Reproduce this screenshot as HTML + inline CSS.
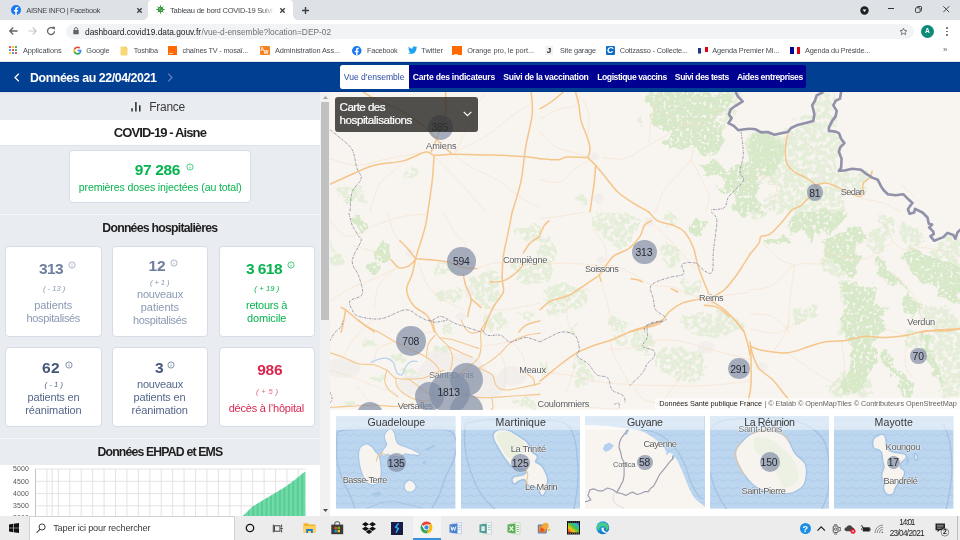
<!DOCTYPE html>
<html><head><meta charset="utf-8"><title>Tableau de bord COVID-19</title>
<style>
*{box-sizing:border-box;margin:0;padding:0}
html,body{width:960px;height:540px;overflow:hidden;background:#fff;font-family:"Liberation Sans",sans-serif}
#root{position:relative;width:960px;height:540px;overflow:hidden;will-change:transform}
.a{position:absolute}
.t{white-space:nowrap}
svg{overflow:visible}
</style></head><body><div id="root">
<div class="a" style="left:0.00px;top:0.00px;width:960.00px;height:20.00px;background:#dee1e6;"></div>
<svg class="a" style="left:142px;top:0" width="158" height="20" viewBox="0 0 158 20"><path d="M0 20 C4 20 6 18 6 14 V4 C6 1.500 7.500 0 10 0 H147 C149.500 0 151 1.500 151 4 V14 C151 18 153 20 157 20 Z" fill="#fff"/></svg>
<div class="a" style="left:0.00px;top:20.00px;width:960.00px;height:21.00px;background:#fff;"></div>
<div class="a" style="left:66.00px;top:23.50px;width:848.00px;height:15.50px;background:#f1f3f4;border-radius:8px;"></div>
<div class="a" style="left:0.00px;top:41.00px;width:960.00px;height:20.00px;background:#fff;"></div>
<div class="a" style="left:0.00px;top:60.50px;width:960.00px;height:1.00px;background:#e4e6ea;"></div>
<svg class="a" style="left:11px;top:5px" width="10" height="10" viewBox="0 0 20 20"><circle cx="10" cy="10" r="10" fill="#1877f2"/><path d="M13.9 12.9l.45-2.9h-2.8V8.1c0-.8.4-1.57 1.64-1.57h1.27V4.07S13.32 3.87 12.2 3.87c-2.28 0-3.77 1.38-3.77 3.88V10H5.9v2.9h2.53V20h3.12v-7.1z" fill="#fff"/></svg>
<div class="a t" style="left:26.30px;top:6.84px;font-size:7.6px;line-height:7.6px;color:#45494d;letter-spacing:-0.426px;">AISNE INFO | Facebook</div>
<svg class="a" style="left:136.5px;top:7.5px" width="5" height="5" viewBox="0 0 5 5"><path d="M0.3 0.3L4.7 4.7M4.7 0.3L0.3 4.7" stroke="#3c4043" stroke-width="1.300"/></svg>
<svg class="a" style="left:155.6px;top:5.4px" width="9" height="9" viewBox="0 0 18 18"><circle cx="9" cy="9" r="5.6" fill="#3f9a45"/><g stroke="#3f9a45" stroke-width="2" stroke-linecap="round"><path d="M9 1.500v3M9 13.500v3M1.500 9h3M13.500 9h3M3.700 3.700l2 2M12.300 12.300l2 2M14.300 3.700l-2 2M5.700 12.300l-2 2"/></g><circle cx="7.300" cy="7.600" r="1.200" fill="#bfe3c2"/><circle cx="10.800" cy="10.500" r="1.100" fill="#bfe3c2"/></svg>
<div class="a t" style="left:170.00px;top:6.84px;font-size:7.6px;line-height:7.6px;color:#45494d;letter-spacing:-0.259px;">Tableau de bord COVID-19 Suivi</div>
<div class="a" style="left:262.00px;top:3.00px;width:13.00px;height:14.00px;background:linear-gradient(90deg,rgba(255,255,255,0),#fff);"></div>
<svg class="a" style="left:280.3px;top:7.5px" width="5" height="5" viewBox="0 0 5 5"><path d="M0.3 0.3L4.7 4.7M4.7 0.3L0.3 4.7" stroke="#3c4043" stroke-width="1.300"/></svg>
<svg class="a" style="left:301.5px;top:6.5px" width="7" height="7" viewBox="0 0 7 7"><path d="M3.5 0V7M0 3.5H7" stroke="#3c4043" stroke-width="1.400"/></svg>
<svg class="a" style="left:860px;top:6px" width="9" height="9" viewBox="0 0 9 9"><circle cx="4.5" cy="4.5" r="4.2" fill="#202124"/><path d="M2.6 3.6H6.4L4.5 6z" fill="#fff"/></svg>
<div class="a" style="left:887.50px;top:8.30px;width:6.50px;height:0.80px;background:#333;"></div>
<svg class="a" style="left:914.5px;top:5.5px" width="7" height="7" viewBox="0 0 7 7"><rect x="0.5" y="1.8" width="4.6" height="4.6" fill="none" stroke="#333" stroke-width="0.9" rx="0.8"/><path d="M1.9 1.8V1.2c0-.4.3-.7.7-.7H5.8c.4 0 .7.3.7.7V4.4c0 .4-.3.7-.7.7H5.2" fill="none" stroke="#333" stroke-width="0.9"/></svg>
<svg class="a" style="left:943px;top:6px" width="6.5" height="6.5" viewBox="0 0 6.5 6.5"><path d="M0.3 0.3L6.2 6.2M6.2 0.3L0.3 6.2" stroke="#333" stroke-width="0.9"/></svg>
<svg class="a" style="left:9px;top:27px" width="9" height="8" viewBox="0 0 9 8"><path d="M4.2 0.5L0.8 4L4.2 7.5M0.8 4H8.6" fill="none" stroke="#5f6368" stroke-width="1.300"/></svg>
<svg class="a" style="left:28px;top:27px" width="9" height="8" viewBox="0 0 9 8"><path d="M4.8 0.5L8.2 4L4.8 7.5M8.2 4H0.4" fill="none" stroke="#c4c7cb" stroke-width="1.1"/></svg>
<svg class="a" style="left:46px;top:26px" width="10" height="10" viewBox="0 0 10 10"><path d="M8.500 5.200A3.500 3.500 0 1 1 7.400 2.500" fill="none" stroke="#5f6368" stroke-width="1.300"/><path d="M5.700 0.700H8.900V3.900z" fill="#5f6368"/></svg>
<svg class="a" style="left:72.5px;top:27.3px" width="6" height="7.5" viewBox="0 0 6 7.5"><rect x="0.3" y="3" width="5.4" height="4.3" rx="0.6" fill="#5f6368"/><path d="M1.4 3.2V2.2a1.6 1.6 0 0 1 3.2 0V3.2" fill="none" stroke="#5f6368" stroke-width="0.9"/></svg>
<div class="a t" style="left:85.00px;top:27.74px;font-size:8.4px;line-height:8.4px;color:#202124;letter-spacing:-0.025px;">dashboard.covid19.data.gouv.fr</div>
<div class="a t" style="left:201.50px;top:27.74px;font-size:8.4px;line-height:8.4px;color:#6f7377;letter-spacing:-0.017px;">/vue-d-ensemble?location=DEP-02</div>
<svg class="a" style="left:899px;top:26.5px" width="9" height="9" viewBox="0 0 24 24"><path d="M12 3.2l2.7 5.9 6.4.7-4.8 4.3 1.4 6.3L12 17.2l-5.7 3.2 1.4-6.3-4.8-4.3 6.4-.7z" fill="none" stroke="#5f6368" stroke-width="2.2" stroke-linejoin="round"/></svg>
<div class="a" style="left:921.00px;top:25.00px;width:13.00px;height:13.00px;background:#0b8a78;border-radius:50%;"></div>
<div class="a t" style="left:925.12px;top:28.33px;font-size:6.6px;line-height:6.6px;color:#fff;font-weight:bold;">A</div>
<div class="a" style="left:946.30px;top:27.40px;width:1.60px;height:1.60px;background:#5f6368;border-radius:50%;"></div>
<div class="a" style="left:946.30px;top:30.80px;width:1.60px;height:1.60px;background:#5f6368;border-radius:50%;"></div>
<div class="a" style="left:946.30px;top:34.20px;width:1.60px;height:1.60px;background:#5f6368;border-radius:50%;"></div>
<div class="a" style="left:9.20px;top:46.40px;width:1.70px;height:1.70px;background:#ea4335;border-radius:50%;"></div>
<div class="a" style="left:12.10px;top:46.40px;width:1.70px;height:1.70px;background:#fbbc04;border-radius:50%;"></div>
<div class="a" style="left:15.00px;top:46.40px;width:1.70px;height:1.70px;background:#34a853;border-radius:50%;"></div>
<div class="a" style="left:9.20px;top:49.30px;width:1.70px;height:1.70px;background:#4285f4;border-radius:50%;"></div>
<div class="a" style="left:12.10px;top:49.30px;width:1.70px;height:1.70px;background:#ea4335;border-radius:50%;"></div>
<div class="a" style="left:15.00px;top:49.30px;width:1.70px;height:1.70px;background:#34a853;border-radius:50%;"></div>
<div class="a" style="left:9.20px;top:52.20px;width:1.70px;height:1.70px;background:#fbbc04;border-radius:50%;"></div>
<div class="a" style="left:12.10px;top:52.20px;width:1.70px;height:1.70px;background:#4285f4;border-radius:50%;"></div>
<div class="a" style="left:15.00px;top:52.20px;width:1.70px;height:1.70px;background:#ea4335;border-radius:50%;"></div>
<div class="a t" style="left:23.00px;top:46.96px;font-size:7.35px;line-height:7.35px;color:#484c51;letter-spacing:-0.094px;">Applications</div>
<svg class="a" style="left:72.5px;top:46px" width="9" height="9" viewBox="0 0 48 48"><path fill="#4285f4" d="M45.1 24.5c0-1.6-.1-3.100-.4-4.500H24v8.500h11.800c-.5 2.800-2.100 5.100-4.400 6.700v5.500h7.100c4.200-3.800 6.600-9.500 6.600-16.200z"/><path fill="#34a853" d="M24 46c5.900 0 10.900-2 14.500-5.300l-7.100-5.500c-2 1.300-4.500 2.100-7.400 2.100-5.700 0-10.500-3.800-12.300-9H4.400v5.700C8 41.100 15.400 46 24 46z"/><path fill="#fbbc05" d="M11.700 28.300c-.4-1.300-.7-2.800-.7-4.300s.3-2.900.7-4.300V14H4.400C2.900 17 2 20.400 2 24s.9 7 2.400 10z"/><path fill="#ea4335" d="M24 10.700c3.200 0 6.100 1.100 8.400 3.300l6.300-6.300C34.900 4.200 29.900 2 24 2 15.400 2 8 6.900 4.400 14l7.300 5.700c1.800-5.200 6.600-9 12.300-9z"/></svg>
<div class="a t" style="left:86.30px;top:46.96px;font-size:7.35px;line-height:7.35px;color:#484c51;letter-spacing:-0.084px;">Google</div>
<svg class="a" style="left:120px;top:45.5px" width="8" height="10" viewBox="0 0 8 10"><path d="M0.5 1.2C0.5 .7 .9 .4 1.4 .4H5.2L7.5 2.6V8.8c0 .5-.4 .8-.9 .8H1.4c-.5 0-.9-.3-.9-.8z" fill="#f9d877"/><path d="M5.2 .4L7.5 2.6H5.2z" fill="#e8b84a"/></svg>
<div class="a t" style="left:133.70px;top:46.96px;font-size:7.35px;line-height:7.35px;color:#484c51;letter-spacing:-0.148px;">Toshiba</div>
<div class="a" style="left:168.00px;top:45.80px;width:9.00px;height:9.40px;background:#ff6a00;"></div>
<div class="a" style="left:169.20px;top:53.40px;width:4.00px;height:0.80px;background:#ffd2ae;"></div>
<div class="a t" style="left:182.50px;top:46.96px;font-size:7.35px;line-height:7.35px;color:#484c51;letter-spacing:-0.201px;">chaînes TV - mosaï...</div>
<div class="a" style="left:260.00px;top:45.80px;width:9.80px;height:9.60px;background:#f58220;border-radius:1px;"></div>
<div class="a t" style="left:260.60px;top:46.92px;font-size:5px;line-height:5px;color:#fff;font-weight:bold;">A</div>
<div class="a t" style="left:263.80px;top:50.23px;font-size:5px;line-height:5px;color:#fff;font-weight:bold;">W</div>
<div class="a t" style="left:275.00px;top:46.96px;font-size:7.35px;line-height:7.35px;color:#484c51;letter-spacing:-0.076px;">Administration Ass...</div>
<svg class="a" style="left:352.3px;top:45.8px" width="9.5" height="9.5" viewBox="0 0 20 20"><circle cx="10" cy="10" r="10" fill="#1877f2"/><path d="M13.9 12.9l.45-2.9h-2.8V8.1c0-.8.4-1.570 1.640-1.570h1.270V4.070S13.320 3.870 12.200 3.870c-2.280 0-3.770 1.380-3.770 3.880V10H5.900v2.900h2.530V20h3.120v-7.100z" fill="#fff"/></svg>
<div class="a t" style="left:367.00px;top:46.96px;font-size:7.35px;line-height:7.35px;color:#484c51;letter-spacing:-0.222px;">Facebook</div>
<svg class="a" style="left:407.5px;top:46.3px" width="9.500" height="8.500" viewBox="0 0 24 20"><path fill="#1da1f2" d="M23.600 2.400c-.9.400-1.800.600-2.800.800 1-.6 1.800-1.500 2.100-2.700-.9.600-2 1-3.100 1.200C18.900.7 17.700.1 16.300.1c-2.600 0-4.800 2.100-4.800 4.800 0 .4 0 .7.100 1.100C7.700 5.800 4.100 3.900 1.700.9c-.4.700-.6 1.500-.6 2.400 0 1.700.8 3.100 2.100 4-.8 0-1.500-.2-2.200-.6v.100c0 2.300 1.700 4.300 3.900 4.700-.4.100-.8.200-1.300.2-.3 0-.6 0-.9-.1.600 1.900 2.400 3.300 4.500 3.300-1.600 1.300-3.700 2.100-6 2.100-.4 0-.8 0-1.100-.1 2.100 1.400 4.600 2.200 7.400 2.200 8.800 0 13.700-7.300 13.700-13.700v-.6c.9-.7 1.700-1.500 2.400-2.500z"/></svg>
<div class="a t" style="left:421.30px;top:46.96px;font-size:7.35px;line-height:7.35px;color:#484c51;letter-spacing:0.008px;">Twitter</div>
<div class="a" style="left:452.30px;top:45.80px;width:10.20px;height:9.60px;background:#ff6a00;"></div>
<div class="a" style="left:453.60px;top:53.50px;width:4.40px;height:0.80px;background:#ffd2ae;"></div>
<div class="a t" style="left:467.20px;top:46.96px;font-size:7.35px;line-height:7.35px;color:#484c51;letter-spacing:-0.046px;">Orange pro, le port...</div>
<div class="a" style="left:545.00px;top:46.00px;width:7.50px;height:9.00px;background:#f1f1f1;"></div>
<div class="a t" style="left:546.78px;top:46.84px;font-size:8px;line-height:8px;color:#111;font-weight:bold;">J</div>
<div class="a t" style="left:560.00px;top:46.96px;font-size:7.35px;line-height:7.35px;color:#484c51;letter-spacing:-0.145px;">Site garage</div>
<div class="a" style="left:605.50px;top:45.60px;width:9.60px;height:9.80px;background:#0f6fc6;border-radius:1px;"></div>
<div class="a t" style="left:607.05px;top:46.25px;font-size:9px;line-height:9px;color:#fff;font-weight:bold;font-style:italic;">C</div>
<div class="a t" style="left:619.80px;top:46.96px;font-size:7.35px;line-height:7.35px;color:#484c51;letter-spacing:-0.156px;">Cotizasso - Collecte...</div>
<div class="a" style="left:698.00px;top:48.00px;width:3.40px;height:4.60px;background:#1f3a8a;"></div>
<div class="a" style="left:701.40px;top:48.00px;width:3.20px;height:4.60px;background:#f3f3f3;"></div>
<div class="a" style="left:704.60px;top:47.20px;width:3.20px;height:4.40px;background:#e1000f;"></div>
<div class="a" style="left:698.00px;top:52.60px;width:3.00px;height:1.60px;background:#8a92a8;"></div>
<div class="a t" style="left:712.20px;top:46.96px;font-size:7.35px;line-height:7.35px;color:#484c51;letter-spacing:-0.097px;">Agenda Premier Mi...</div>
<div class="a" style="left:790.30px;top:46.60px;width:3.30px;height:7.40px;background:#000091;"></div>
<div class="a" style="left:793.60px;top:46.60px;width:3.30px;height:7.40px;background:#fff;"></div>
<div class="a" style="left:796.90px;top:46.60px;width:3.30px;height:7.40px;background:#e1000f;"></div>
<div class="a t" style="left:805.00px;top:46.96px;font-size:7.35px;line-height:7.35px;color:#484c51;letter-spacing:-0.182px;">Agenda du Préside...</div>
<div class="a t" style="left:943.00px;top:46.34px;font-size:8px;line-height:8px;color:#5f6368;">»</div>
<div class="a" style="left:0.00px;top:61.50px;width:960.00px;height:30.50px;background:#003f92;border-top:1.5px solid #00348a;border-bottom:1.5px solid #00348a;"></div>
<div class="a" style="left:340.00px;top:65.00px;width:465.50px;height:23.40px;background:#000091;border-radius:2px;"></div>
<div class="a" style="left:339.80px;top:64.90px;width:68.80px;height:23.80px;background:#fff;border-radius:2.5px 0 0 2.5px;"></div>
<svg class="a" style="left:13.8px;top:72.8px" width="6" height="9" viewBox="0 0 6 9"><path d="M4.8 0.7L1 4.5L4.8 8.3" fill="none" stroke="#fff" stroke-width="1.25"/></svg>
<div class="a t" style="left:30.00px;top:71.96px;font-size:12.4px;line-height:12.4px;color:#fff;font-weight:bold;letter-spacing:-0.442px;">Données au 22/04/2021</div>
<svg class="a" style="left:166.5px;top:73px" width="6" height="9" viewBox="0 0 6 9"><path d="M1.2 0.7L5 4.5L1.2 8.3" fill="none" stroke="#6b84c0" stroke-width="1.1"/></svg>
<div class="a t" style="left:343.80px;top:72.94px;font-size:8.6px;line-height:8.6px;color:#2a4c9f;letter-spacing:-0.028px;">Vue d&#x27;ensemble</div>
<div class="a t" style="left:412.80px;top:72.94px;font-size:8.6px;line-height:8.6px;color:#fff;font-weight:bold;letter-spacing:-0.251px;">Carte des indicateurs</div>
<div class="a t" style="left:503.30px;top:72.94px;font-size:8.6px;line-height:8.6px;color:#fff;font-weight:bold;letter-spacing:-0.302px;">Suivi de la vaccination</div>
<div class="a t" style="left:597.20px;top:72.94px;font-size:8.6px;line-height:8.6px;color:#fff;font-weight:bold;letter-spacing:-0.435px;">Logistique vaccins</div>
<div class="a t" style="left:674.80px;top:72.94px;font-size:8.6px;line-height:8.6px;color:#fff;font-weight:bold;letter-spacing:-0.402px;">Suivi des tests</div>
<div class="a t" style="left:737.00px;top:72.94px;font-size:8.6px;line-height:8.6px;color:#fff;font-weight:bold;letter-spacing:-0.363px;">Aides entreprises</div>
<div class="a" style="left:0.00px;top:92.00px;width:320.00px;height:424.00px;background:#e9edf2;"></div>
<div class="a" style="left:0.00px;top:92.00px;width:320.00px;height:28.00px;background:#e9edf2;"></div>
<div class="a" style="left:0.00px;top:92.00px;width:320.00px;height:3.00px;background:linear-gradient(180deg,rgba(0,20,60,0.05),rgba(0,20,60,0));"></div>
<svg class="a" style="left:130.5px;top:100.5px" width="10" height="11" viewBox="0 0 10 11"><path d="M1 7.2V10.4M4.9 1V10.4M8.8 4.200V10.400" stroke="#2a2a2a" stroke-width="1.5" stroke-linecap="butt"/></svg>
<div class="a t" style="left:149.30px;top:100.96px;font-size:12px;line-height:12px;color:#3a3a3a;letter-spacing:-0.275px;">France</div>
<div class="a" style="left:0.00px;top:120.00px;width:320.00px;height:25.00px;background:#fff;"></div>
<div class="a" style="left:0.00px;top:145.00px;width:320.00px;height:1.00px;background:#dfe4ec;"></div>
<div class="a t" style="left:113.80px;top:126.16px;font-size:13px;line-height:13px;color:#1e1e1e;font-weight:bold;letter-spacing:-0.890px;">COVID-19 - Aisne</div>
<div class="a" style="left:68.70px;top:150.30px;width:182.50px;height:53.10px;background:#fff;border:1px solid #d6dde9;border-radius:4px;"></div>
<div class="a t" style="left:134.80px;top:161.93px;font-size:15.5px;line-height:15.5px;color:#08b450;font-weight:bold;letter-spacing:-0.368px;">97 286</div>
<svg class="a" style="left:185.70px;top:163.20px" width="8" height="8" viewBox="0 0 8 8"><circle cx="4" cy="4" r="3.1" fill="none" stroke="#08b450" stroke-width="0.7"/><path d="M4 3.700V5.600" stroke="#08b450" stroke-width="0.700"/><circle cx="4" cy="2.600" r="0.450" fill="#08b450"/></svg>
<div class="a t" style="left:78.80px;top:181.85px;font-size:10.6px;line-height:10.6px;color:#08b450;letter-spacing:-0.137px;">premières doses injectées (au total)</div>
<div class="a" style="left:0.00px;top:214.00px;width:320.00px;height:1.00px;background:#f4f6f9;"></div>
<div class="a t" style="left:102.30px;top:221.91px;font-size:12.3px;line-height:12.3px;color:#1e1e1e;font-weight:bold;letter-spacing:-0.773px;">Données hospitalières</div>
<div class="a" style="left:5.40px;top:246.20px;width:96.20px;height:91.20px;background:#fff;border:1px solid #d6dde9;border-radius:4px;"></div>
<div class="a" style="left:5.40px;top:347.30px;width:96.20px;height:80.10px;background:#fff;border:1px solid #d6dde9;border-radius:4px;"></div>
<div class="a" style="left:112.00px;top:246.20px;width:96.20px;height:91.20px;background:#fff;border:1px solid #d6dde9;border-radius:4px;"></div>
<div class="a" style="left:112.00px;top:347.30px;width:96.20px;height:80.10px;background:#fff;border:1px solid #d6dde9;border-radius:4px;"></div>
<div class="a" style="left:218.50px;top:246.20px;width:96.20px;height:91.20px;background:#fff;border:1px solid #d6dde9;border-radius:4px;"></div>
<div class="a" style="left:218.50px;top:347.30px;width:96.20px;height:80.10px;background:#fff;border:1px solid #d6dde9;border-radius:4px;"></div>
<div class="a t" style="left:39.00px;top:260.83px;font-size:15.5px;line-height:15.5px;color:#6e7f9f;font-weight:bold;letter-spacing:-0.621px;">313</div>
<svg class="a" style="left:67.70px;top:260.90px" width="8" height="8" viewBox="0 0 8 8"><circle cx="4" cy="4" r="3.1" fill="none" stroke="#8b99b2" stroke-width="0.7"/><path d="M4 3.700V5.600" stroke="#8b99b2" stroke-width="0.700"/><circle cx="4" cy="2.600" r="0.450" fill="#8b99b2"/></svg>
<div class="a t" style="left:43.00px;top:285.24px;font-size:7.6px;line-height:7.6px;color:#8b99b2;font-style:italic;letter-spacing:-0.010px;">( - 13 )</div>
<div class="a t" style="left:34.20px;top:300.16px;font-size:11px;line-height:11px;color:#8b99b2;letter-spacing:-0.053px;">patients</div>
<div class="a t" style="left:26.50px;top:313.16px;font-size:11px;line-height:11px;color:#8b99b2;letter-spacing:-0.331px;">hospitalisés</div>
<div class="a t" style="left:148.50px;top:258.33px;font-size:15.5px;line-height:15.5px;color:#6e7f9f;font-weight:bold;letter-spacing:-0.121px;">12</div>
<svg class="a" style="left:170.00px;top:259.20px" width="8" height="8" viewBox="0 0 8 8"><circle cx="4" cy="4" r="3.1" fill="none" stroke="#8b99b2" stroke-width="0.7"/><path d="M4 3.700V5.600" stroke="#8b99b2" stroke-width="0.700"/><circle cx="4" cy="2.600" r="0.450" fill="#8b99b2"/></svg>
<div class="a t" style="left:150.00px;top:278.54px;font-size:7.6px;line-height:7.6px;color:#8b99b2;font-style:italic;letter-spacing:-0.080px;">( + 1 )</div>
<div class="a t" style="left:137.00px;top:289.16px;font-size:11px;line-height:11px;color:#8b99b2;letter-spacing:-0.213px;">nouveaux</div>
<div class="a t" style="left:140.80px;top:302.16px;font-size:11px;line-height:11px;color:#8b99b2;letter-spacing:-0.041px;">patients</div>
<div class="a t" style="left:133.00px;top:315.06px;font-size:11px;line-height:11px;color:#8b99b2;letter-spacing:-0.315px;">hospitalisés</div>
<div class="a t" style="left:246.00px;top:260.83px;font-size:15.5px;line-height:15.5px;color:#08b450;font-weight:bold;letter-spacing:-0.558px;">3 618</div>
<svg class="a" style="left:287.20px;top:260.90px" width="8" height="8" viewBox="0 0 8 8"><circle cx="4" cy="4" r="3.1" fill="none" stroke="#08b450" stroke-width="0.7"/><path d="M4 3.700V5.600" stroke="#08b450" stroke-width="0.700"/><circle cx="4" cy="2.600" r="0.450" fill="#08b450"/></svg>
<div class="a t" style="left:254.30px;top:285.24px;font-size:7.6px;line-height:7.6px;color:#08b450;font-style:italic;letter-spacing:0.114px;">( + 19 )</div>
<div class="a t" style="left:246.00px;top:300.16px;font-size:11px;line-height:11px;color:#08b450;letter-spacing:-0.268px;">retours à</div>
<div class="a t" style="left:247.00px;top:313.16px;font-size:11px;line-height:11px;color:#08b450;letter-spacing:-0.131px;">domicile</div>
<div class="a t" style="left:42.00px;top:360.33px;font-size:15.5px;line-height:15.5px;color:#44567a;font-weight:bold;letter-spacing:0.379px;">62</div>
<svg class="a" style="left:64.70px;top:360.90px" width="8" height="8" viewBox="0 0 8 8"><circle cx="4" cy="4" r="3.1" fill="none" stroke="#55678a" stroke-width="0.7"/><path d="M4 3.700V5.600" stroke="#55678a" stroke-width="0.700"/><circle cx="4" cy="2.600" r="0.450" fill="#55678a"/></svg>
<div class="a t" style="left:44.50px;top:381.44px;font-size:7.6px;line-height:7.6px;color:#55678a;font-style:italic;letter-spacing:0.049px;">( - 1 )</div>
<div class="a t" style="left:27.50px;top:392.36px;font-size:11px;line-height:11px;color:#55678a;letter-spacing:-0.165px;">patients en</div>
<div class="a t" style="left:25.20px;top:405.06px;font-size:11px;line-height:11px;color:#55678a;letter-spacing:-0.107px;">réanimation</div>
<div class="a t" style="left:155.00px;top:359.93px;font-size:15.5px;line-height:15.5px;color:#44567a;font-weight:bold;letter-spacing:0.379px;">3</div>
<svg class="a" style="left:167.20px;top:360.50px" width="8" height="8" viewBox="0 0 8 8"><circle cx="4" cy="4" r="3.1" fill="none" stroke="#55678a" stroke-width="0.7"/><path d="M4 3.700V5.600" stroke="#55678a" stroke-width="0.700"/><circle cx="4" cy="2.600" r="0.450" fill="#55678a"/></svg>
<div class="a t" style="left:137.00px;top:379.36px;font-size:11px;line-height:11px;color:#55678a;letter-spacing:-0.213px;">nouveaux</div>
<div class="a t" style="left:133.50px;top:392.36px;font-size:11px;line-height:11px;color:#55678a;letter-spacing:-0.165px;">patients en</div>
<div class="a t" style="left:131.60px;top:405.06px;font-size:11px;line-height:11px;color:#55678a;letter-spacing:-0.116px;">réanimation</div>
<div class="a t" style="left:257.20px;top:362.33px;font-size:15.5px;line-height:15.5px;color:#d8264f;font-weight:bold;letter-spacing:-0.187px;">986</div>
<div class="a t" style="left:256.00px;top:388.44px;font-size:7.6px;line-height:7.6px;color:#e0667f;font-style:italic;letter-spacing:0.320px;">( + 5 )</div>
<div class="a t" style="left:228.70px;top:402.86px;font-size:11px;line-height:11px;color:#d8264f;letter-spacing:-0.211px;">décès à l’hôpital</div>
<div class="a" style="left:0.00px;top:438.00px;width:320.00px;height:1.00px;background:#f4f6f9;"></div>
<div class="a t" style="left:97.50px;top:445.61px;font-size:12.3px;line-height:12.3px;color:#1e1e1e;font-weight:bold;letter-spacing:-0.857px;">Données EHPAD et EMS</div>
<div class="a" style="left:0.00px;top:464.60px;width:320.00px;height:51.40px;background:#fff;"></div>
<svg class="a" style="left:0px;top:0px;overflow:hidden;" width="320" height="516" viewBox="0 0 320 516"><path d="M35.50 469V516" stroke="#dcdcdc" stroke-width="0.800"/><path d="M46.93 469V516" stroke="#dcdcdc" stroke-width="0.800"/><path d="M58.36 469V516" stroke="#dcdcdc" stroke-width="0.800"/><path d="M69.79 469V516" stroke="#dcdcdc" stroke-width="0.800"/><path d="M81.22 469V516" stroke="#dcdcdc" stroke-width="0.800"/><path d="M92.65 469V516" stroke="#dcdcdc" stroke-width="0.800"/><path d="M104.08 469V516" stroke="#dcdcdc" stroke-width="0.800"/><path d="M115.51 469V516" stroke="#dcdcdc" stroke-width="0.800"/><path d="M126.94 469V516" stroke="#dcdcdc" stroke-width="0.800"/><path d="M138.37 469V516" stroke="#dcdcdc" stroke-width="0.800"/><path d="M149.80 469V516" stroke="#dcdcdc" stroke-width="0.800"/><path d="M161.23 469V516" stroke="#dcdcdc" stroke-width="0.800"/><path d="M172.66 469V516" stroke="#dcdcdc" stroke-width="0.800"/><path d="M184.09 469V516" stroke="#dcdcdc" stroke-width="0.800"/><path d="M195.52 469V516" stroke="#dcdcdc" stroke-width="0.800"/><path d="M206.95 469V516" stroke="#dcdcdc" stroke-width="0.800"/><path d="M218.38 469V516" stroke="#dcdcdc" stroke-width="0.800"/><path d="M229.81 469V516" stroke="#dcdcdc" stroke-width="0.800"/><path d="M241.24 469V516" stroke="#dcdcdc" stroke-width="0.800"/><path d="M252.67 469V516" stroke="#dcdcdc" stroke-width="0.800"/><path d="M264.10 469V516" stroke="#dcdcdc" stroke-width="0.800"/><path d="M275.53 469V516" stroke="#dcdcdc" stroke-width="0.800"/><path d="M286.96 469V516" stroke="#dcdcdc" stroke-width="0.800"/><path d="M298.39 469V516" stroke="#dcdcdc" stroke-width="0.800"/><path d="M52.20 469V516" stroke="#dcdcdc" stroke-width="0.800"/><path d="M35.5 469H305.5" stroke="#dcdcdc" stroke-width="0.800"/><path d="M35.5 481.3H305.5" stroke="#dcdcdc" stroke-width="0.800"/><path d="M35.5 493.6H305.5" stroke="#dcdcdc" stroke-width="0.800"/><path d="M35.5 505.8H305.5" stroke="#dcdcdc" stroke-width="0.800"/><path d="M35.5 469V516" stroke="#bdbdbd" stroke-width="0.8"/><clipPath id="ar"><path d="M242.4 516.5L252.6 506.5L263.7 499.8L274.8 493.2L285.9 486.4L295.2 479.4L302.6 473.4L305.4 471.5V516.5Z"/></clipPath><path d="M242.4 516.5L252.6 506.5L263.7 499.8L274.8 493.2L285.9 486.4L295.2 479.4L302.6 473.4L305.4 471.5V516.5Z" fill="#72daa8"/><g clip-path="url(#ar)"><path d="M244.20 465V516.5" stroke="#4fc98e" stroke-width="1.900" opacity="0.75"/><path d="M248.66 465V516.5" stroke="#4fc98e" stroke-width="1.900" opacity="0.75"/><path d="M253.12 465V516.5" stroke="#4fc98e" stroke-width="1.900" opacity="0.75"/><path d="M257.58 465V516.5" stroke="#4fc98e" stroke-width="1.900" opacity="0.75"/><path d="M262.04 465V516.5" stroke="#4fc98e" stroke-width="1.900" opacity="0.75"/><path d="M266.50 465V516.5" stroke="#4fc98e" stroke-width="1.900" opacity="0.75"/><path d="M270.96 465V516.5" stroke="#4fc98e" stroke-width="1.900" opacity="0.75"/><path d="M275.42 465V516.5" stroke="#4fc98e" stroke-width="1.900" opacity="0.75"/><path d="M279.88 465V516.5" stroke="#4fc98e" stroke-width="1.900" opacity="0.75"/><path d="M284.34 465V516.5" stroke="#4fc98e" stroke-width="1.900" opacity="0.75"/><path d="M288.80 465V516.5" stroke="#4fc98e" stroke-width="1.900" opacity="0.75"/><path d="M293.26 465V516.5" stroke="#4fc98e" stroke-width="1.900" opacity="0.75"/><path d="M297.72 465V516.5" stroke="#4fc98e" stroke-width="1.900" opacity="0.75"/><path d="M302.18 465V516.5" stroke="#4fc98e" stroke-width="1.900" opacity="0.75"/><path d="M306.64 465V516.5" stroke="#4fc98e" stroke-width="1.900" opacity="0.75"/></g></svg>
<div class="a t" style="left:13.00px;top:466.38px;font-size:6.9px;line-height:6.9px;color:#555;letter-spacing:0.162px;">5000</div>
<div class="a t" style="left:13.00px;top:478.68px;font-size:6.9px;line-height:6.9px;color:#555;letter-spacing:0.162px;">4500</div>
<div class="a t" style="left:13.00px;top:490.98px;font-size:6.9px;line-height:6.9px;color:#555;letter-spacing:0.162px;">4000</div>
<div class="a t" style="left:13.00px;top:503.18px;font-size:6.9px;line-height:6.9px;color:#555;letter-spacing:0.162px;">3500</div>
<div class="a t" style="left:13.00px;top:515.48px;font-size:6.9px;line-height:6.9px;color:#555;letter-spacing:0.162px;">3000</div>
<div class="a" style="left:320.00px;top:92.00px;width:10.00px;height:424.00px;background:#f1f1f1;"></div>
<div class="a" style="left:321.20px;top:102.20px;width:7.40px;height:218.30px;background:#c1c1c1;"></div>
<svg class="a" style="left:322.500px;top:95.500px" width="5" height="3" viewBox="0 0 5 3"><path d="M0 3L2.500 0L5 3z" fill="#a3a3a3"/></svg>
<svg class="a" style="left:322.500px;top:509px" width="5" height="3" viewBox="0 0 5 3"><path d="M0 0L2.500 3L5 0z" fill="#505050"/></svg>
<svg class="a" style="left:330px;top:92px;overflow:hidden" width="630" height="317.6" viewBox="0 0 630 317.6"><rect x="0" y="0" width="630" height="317.6" fill="#f8f4f0"/><defs><filter id="lacyP" x="0" y="0" width="100%" height="100%" color-interpolation-filters="sRGB"><feTurbulence type="fractalNoise" baseFrequency="0.09" numOctaves="3" seed="3" result="n"/><feDisplacementMap in="SourceGraphic" in2="n" scale="14" xChannelSelector="R" yChannelSelector="G" result="d"/><feTurbulence type="fractalNoise" baseFrequency="0.22" numOctaves="2" seed="8" result="n2"/><feColorMatrix in="n2" type="matrix" values="0 0 0 0 0  0 0 0 0 0  0 0 0 0 0  7 0 0 0 -2.6" result="mask"/><feComposite in="d" in2="mask" operator="in"/></filter><filter id="lacyD" x="0" y="0" width="100%" height="100%" color-interpolation-filters="sRGB"><feTurbulence type="fractalNoise" baseFrequency="0.1" numOctaves="3" seed="11" result="n"/><feDisplacementMap in="SourceGraphic" in2="n" scale="13" xChannelSelector="R" yChannelSelector="G" result="d"/><feTurbulence type="fractalNoise" baseFrequency="0.3" numOctaves="2" seed="16" result="n2"/><feColorMatrix in="n2" type="matrix" values="0 0 0 0 0  0 0 0 0 0  0 0 0 0 0  9 0 0 0 -2.75" result="mask"/><feComposite in="d" in2="mask" operator="in"/></filter></defs><g filter="url(#lacyP)"><rect x="0" y="0" width="630" height="318" fill="none"/><g fill="#d8e9ca" opacity="0.6"><path d="M6.7 97.8C7.8 95.6 14.1 93.7 17.8 93.3C21.5 93.0 25.6 93.3 28.9 95.6C32.2 97.8 37.4 104.1 37.8 106.7C38.1 109.3 34.1 110.6 31.1 111.1C28.1 111.7 23.3 110.7 20.0 110.0C16.7 109.3 13.3 108.7 11.1 106.7C8.9 104.6 5.6 100.0 6.7 97.8Z"/><path d="M73.3 80.0C75.0 78.6 81.9 75.7 84.4 75.6C87.0 75.4 89.3 77.4 88.9 78.9C88.5 80.4 84.6 83.6 82.2 84.4C79.8 85.3 75.9 84.7 74.4 84.0C73.0 83.3 71.7 81.4 73.3 80.0Z"/><path d="M392.2 0.0C393.7 -2.2 407.8 -3.0 410.0 0.0C412.2 3.0 408.1 11.9 405.6 17.8C403.0 23.7 397.4 34.1 394.4 35.6C391.5 37.0 386.7 30.4 387.8 26.7C388.9 23.0 400.4 17.8 401.1 13.3C401.9 8.9 390.7 2.2 392.2 0.0Z"/><path d="M305.6 26.7C306.3 25.4 310.7 23.7 312.2 24.4C313.7 25.2 315.2 29.8 314.4 31.1C313.7 32.4 309.3 33.0 307.8 32.2C306.3 31.5 304.8 28.0 305.6 26.7Z"/><path d="M245.6 103.3C245.6 101.1 251.9 100.9 254.4 102.2C257.0 103.5 261.1 108.9 261.1 111.1C261.1 113.3 257.0 116.9 254.4 115.6C251.9 114.3 245.6 105.6 245.6 103.3Z"/><path d="M420.0 40.0C424.1 36.1 438.1 43.1 444.4 43.3C450.7 43.5 454.1 42.6 457.8 41.1C461.5 39.6 462.4 36.3 466.7 34.4C470.9 32.6 478.1 29.3 483.3 30.0C488.5 30.7 493.5 36.9 497.8 38.9C502.0 40.9 506.3 40.2 508.9 42.2C511.5 44.3 513.3 48.1 513.3 51.1C513.3 54.1 509.4 55.6 508.9 60.0C508.3 64.4 506.3 74.6 510.0 77.8C513.7 80.9 526.1 77.4 531.1 78.9C536.1 80.4 540.0 82.0 540.0 86.7C540.0 91.3 534.8 104.3 531.1 106.7C527.4 109.1 521.5 98.9 517.8 101.1C514.1 103.3 520.7 116.9 508.9 120.0C497.0 123.1 459.3 122.2 446.7 120.0C434.1 117.8 433.3 110.4 433.3 106.7C433.3 103.0 447.4 100.7 446.7 97.8C445.9 94.8 429.6 92.6 428.9 88.9C428.1 85.2 443.7 79.3 442.2 75.6C440.7 71.9 423.7 72.6 420.0 66.7C416.3 60.7 415.9 43.9 420.0 40.0Z"/><path d="M460.0 44.4C462.2 40.0 474.8 39.3 482.2 40.0C489.6 40.7 500.4 43.3 504.4 48.9C508.5 54.4 509.6 68.9 506.7 73.3C503.7 77.8 493.0 76.7 486.7 75.6C480.4 74.4 473.3 71.9 468.9 66.7C464.4 61.5 457.8 48.9 460.0 44.4Z"/><path d="M464.4 26.7C464.4 25.4 479.6 25.6 483.3 22.2C487.0 18.9 485.0 10.4 486.7 6.7C488.3 3.0 489.6 1.1 493.3 0.0C497.0 -1.1 507.0 -2.2 508.9 0.0C510.7 2.2 505.0 9.3 504.4 13.3C503.9 17.4 506.5 20.4 505.6 24.4C504.6 28.5 502.6 36.9 498.9 37.8C495.2 38.7 489.1 31.9 483.3 30.0C477.6 28.1 464.4 28.0 464.4 26.7Z"/><path d="M106.7 172.2C108.1 170.4 117.0 169.8 120.0 171.1C123.0 172.4 125.9 178.1 124.4 180.0C123.0 181.9 114.1 183.5 111.1 182.2C108.1 180.9 105.2 174.1 106.7 172.2Z"/><path d="M186.7 137.8C189.1 135.6 206.1 133.3 210.0 135.6C213.9 137.8 212.4 148.9 210.0 151.1C207.6 153.3 199.4 151.1 195.6 148.9C191.7 146.7 184.3 140.0 186.7 137.8Z"/><path d="M182.2 173.3C185.7 170.0 205.4 167.8 210.0 171.1C214.6 174.4 213.5 190.0 210.0 193.3C206.5 196.7 193.5 194.4 188.9 191.1C184.3 187.8 178.7 176.7 182.2 173.3Z"/><path d="M142.2 184.4C146.3 181.5 164.4 178.1 168.9 182.2C173.3 186.3 171.9 203.7 168.9 208.9C165.9 214.1 155.2 214.8 151.1 213.3C147.0 211.9 145.9 204.8 144.4 200.0C143.0 195.2 138.1 187.4 142.2 184.4Z"/><path d="M106.7 200.0C110.0 198.3 127.4 196.3 131.1 197.8C134.8 199.3 132.2 207.2 128.9 208.9C125.6 210.6 114.8 209.3 111.1 207.8C107.4 206.3 103.3 201.7 106.7 200.0Z"/><path d="M155.6 222.2C158.1 219.6 170.7 221.5 173.3 224.4C175.9 227.4 173.7 237.4 171.1 240.0C168.5 242.6 160.4 243.0 157.8 240.0C155.2 237.0 153.0 224.8 155.6 222.2Z"/><path d="M188.9 220.0C191.1 218.5 202.6 219.3 204.4 221.1C206.3 223.0 202.2 229.6 200.0 231.1C197.8 232.6 193.0 231.9 191.1 230.0C189.3 228.1 186.7 221.5 188.9 220.0Z"/><path d="M0.0 151.1C1.5 148.9 5.9 155.6 8.9 157.8C11.9 160.0 17.0 161.9 17.8 164.4C18.5 167.0 16.3 172.2 13.3 173.3C10.4 174.4 2.2 174.8 0.0 171.1C-2.2 167.4 -1.5 153.3 0.0 151.1Z"/><path d="M261.1 124.4C264.4 121.5 275.6 119.6 283.3 120.0C291.1 120.4 304.4 123.0 307.8 126.7C311.1 130.4 304.8 137.8 303.3 142.2C301.9 146.7 302.2 151.1 298.9 153.3C295.6 155.6 287.0 157.0 283.3 155.6C279.6 154.1 280.0 147.4 276.7 144.4C273.3 141.5 265.9 141.1 263.3 137.8C260.7 134.4 257.8 127.4 261.1 124.4Z"/><path d="M331.1 152.2C333.3 150.0 342.8 151.3 345.6 153.3C348.3 155.4 348.5 161.3 347.8 164.4C347.0 167.6 343.7 171.9 341.1 172.2C338.5 172.6 333.9 170.0 332.2 166.7C330.6 163.3 328.9 154.4 331.1 152.2Z"/><path d="M210.0 148.9C212.2 141.9 220.7 144.1 223.3 146.7C225.9 149.3 226.3 157.8 225.6 164.4C224.8 171.1 221.5 182.6 218.9 186.7C216.3 190.7 211.5 195.2 210.0 188.9C208.5 182.6 207.8 155.9 210.0 148.9Z"/><path d="M216.7 195.6C220.7 190.7 235.9 192.6 243.3 193.3C250.7 194.1 259.3 196.7 261.1 200.0C263.0 203.3 258.5 210.0 254.4 213.3C250.4 216.7 242.6 218.5 236.7 220.0C230.7 221.5 222.2 226.3 218.9 222.2C215.6 218.1 212.6 200.4 216.7 195.6Z"/><path d="M352.2 190.0C354.1 187.8 364.8 187.2 367.8 188.9C370.7 190.6 371.9 197.8 370.0 200.0C368.1 202.2 359.6 203.9 356.7 202.2C353.7 200.6 350.4 192.2 352.2 190.0Z"/><path d="M356.7 224.4C360.4 221.3 374.4 220.7 383.3 221.1C392.2 221.5 405.6 223.5 410.0 226.7C414.4 229.8 418.1 237.8 410.0 240.0C401.9 242.2 370.0 242.6 361.1 240.0C352.2 237.4 353.0 227.6 356.7 224.4Z"/><path d="M281.1 227.8C283.3 225.6 293.7 224.6 296.7 226.7C299.6 228.7 301.1 237.8 298.9 240.0C296.7 242.2 286.3 242.0 283.3 240.0C280.4 238.0 278.9 230.0 281.1 227.8Z"/><path d="M334.4 124.4C335.9 123.0 343.3 122.2 345.6 123.3C347.8 124.4 349.3 129.6 347.8 131.1C346.3 132.6 338.9 133.3 336.7 132.2C334.4 131.1 333.0 125.9 334.4 124.4Z"/><path d="M491.1 166.7C493.3 163.7 504.4 162.6 508.9 164.4C513.3 166.3 517.8 174.1 517.8 177.8C517.8 181.5 512.6 185.9 508.9 186.7C505.2 187.4 498.5 185.6 495.6 182.2C492.6 178.9 488.9 169.6 491.1 166.7Z"/><path d="M508.9 188.9C511.1 187.0 523.0 190.0 524.4 193.3C525.9 196.7 520.0 203.7 517.8 208.9C515.6 214.1 511.9 219.3 511.1 224.4C510.4 229.6 513.7 237.4 513.3 240.0C513.0 242.6 508.9 244.1 508.9 240.0C508.9 235.9 513.0 221.5 513.3 215.6C513.7 209.6 511.9 208.9 511.1 204.4C510.4 200.0 506.7 190.7 508.9 188.9Z"/><path d="M551.1 124.4C552.6 122.2 560.0 123.7 562.2 126.7C564.4 129.6 565.9 140.0 564.4 142.2C563.0 144.4 555.6 143.0 553.3 140.0C551.1 137.0 549.6 126.7 551.1 124.4Z"/><path d="M571.1 133.3C574.1 131.5 585.2 132.6 588.9 135.6C592.6 138.5 594.8 147.8 593.3 151.1C591.9 154.4 583.7 156.3 580.0 155.6C576.3 154.8 572.6 150.4 571.1 146.7C569.6 143.0 568.1 135.2 571.1 133.3Z"/><path d="M604.4 151.1C609.1 148.5 625.7 142.6 630.0 146.7C634.3 150.7 632.4 171.9 630.0 175.6C627.6 179.3 620.2 171.1 615.6 168.9C610.9 166.7 604.1 165.2 602.2 162.2C600.4 159.3 599.8 153.7 604.4 151.1Z"/><path d="M535.6 142.2C538.1 138.9 552.6 135.6 555.6 137.8C558.5 140.0 555.9 152.2 553.3 155.6C550.7 158.9 543.0 160.0 540.0 157.8C537.0 155.6 533.0 145.6 535.6 142.2Z"/><path d="M464.4 217.8C468.1 215.6 482.6 214.8 486.7 215.6C490.7 216.3 491.1 219.6 488.9 222.2C486.7 224.8 477.4 230.0 473.3 231.1C469.3 232.2 465.9 231.1 464.4 228.9C463.0 226.7 460.7 220.0 464.4 217.8Z"/><path d="M420.0 120.0C423.0 118.5 435.6 118.9 437.8 120.0C440.0 121.1 436.3 125.2 433.3 126.7C430.4 128.1 422.2 130.0 420.0 128.9C417.8 127.8 417.0 121.5 420.0 120.0Z"/><path d="M588.9 215.6C591.9 212.6 608.7 215.9 615.6 217.8C622.4 219.6 627.6 223.7 630.0 226.7C632.4 229.6 635.4 234.1 630.0 235.6C624.6 237.0 604.6 238.9 597.8 235.6C590.9 232.2 585.9 218.5 588.9 215.6Z"/><path d="M32.8 247.7C34.3 246.2 41.7 245.5 43.8 246.6C45.8 247.7 46.3 252.8 44.8 254.3C43.4 255.7 37.0 256.4 35.0 255.3C33.0 254.3 31.4 249.1 32.8 247.7Z"/><path d="M61.3 260.8C62.3 259.0 70.0 259.4 72.2 260.8C74.4 262.3 75.5 267.7 74.4 269.6C73.3 271.4 67.8 273.2 65.6 271.8C63.4 270.3 60.2 262.6 61.3 260.8Z"/><path d="M102.8 252.1C104.3 250.8 111.6 251.7 113.8 253.2C115.9 254.6 117.4 259.5 115.9 260.8C114.5 262.1 107.2 262.3 105.0 260.8C102.8 259.4 101.4 253.3 102.8 252.1Z"/><path d="M159.7 230.2C161.5 228.4 172.1 226.9 175.0 228.0C177.9 229.1 179.0 234.9 177.2 236.8C175.4 238.6 167.0 240.0 164.1 238.9C161.2 237.8 157.9 232.0 159.7 230.2Z"/><path d="M39.4 280.5C41.6 279.8 52.5 281.2 54.7 282.7C56.9 284.2 54.7 288.5 52.5 289.3C50.3 290.0 43.8 288.5 41.6 287.1C39.4 285.6 37.2 281.2 39.4 280.5Z"/><path d="M186.0 306.8C188.5 305.1 200.2 304.2 203.5 305.7C206.7 307.1 208.2 313.9 205.6 315.5C203.1 317.1 191.4 317.0 188.1 315.5C184.9 314.0 183.4 308.4 186.0 306.8Z"/><path d="M74.4 278.3C75.7 277.0 81.5 276.1 83.1 277.2C84.8 278.3 85.5 283.6 84.2 284.9C83.0 286.2 77.1 286.0 75.5 284.9C73.8 283.8 73.1 279.6 74.4 278.3Z"/><path d="M13.1 308.9C14.8 307.9 22.1 306.9 24.1 307.9C26.1 308.8 26.8 313.3 25.2 314.4C23.5 315.5 16.2 315.3 14.2 314.4C12.2 313.5 11.5 310.0 13.1 308.9Z"/><path d="M113.8 232.4C115.0 231.1 121.1 232.0 122.5 233.5C124.0 234.9 123.8 239.9 122.5 241.1C121.2 242.4 116.3 242.6 114.9 241.1C113.4 239.7 112.5 233.7 113.8 232.4Z"/><path d="M329.2 258.6C332.9 255.5 344.4 255.0 350.0 255.3C355.7 255.7 358.8 258.1 363.1 260.8C367.5 263.6 374.8 267.4 376.3 271.8C377.7 276.1 375.5 284.2 371.9 287.1C368.2 290.0 359.9 290.0 354.4 289.3C348.9 288.5 343.5 285.2 339.1 282.7C334.7 280.1 329.8 278.0 328.1 273.9C326.5 269.9 325.6 261.7 329.2 258.6Z"/><path d="M352.2 230.2C354.8 228.0 367.9 227.6 376.3 228.0C384.7 228.4 398.5 229.8 402.5 232.4C406.5 234.9 404.0 241.1 400.3 243.3C396.7 245.5 387.2 245.9 380.6 245.5C374.1 245.1 365.7 243.7 361.0 241.1C356.2 238.6 349.6 232.4 352.2 230.2Z"/><path d="M301.9 243.3C304.4 240.8 315.7 239.3 319.4 241.1C323.0 242.9 324.9 250.4 323.8 254.3C322.7 258.1 316.1 263.7 312.8 264.1C309.5 264.5 305.9 259.9 304.1 256.4C302.2 253.0 299.3 245.9 301.9 243.3Z"/><path d="M280.0 230.2C282.6 228.5 295.0 226.9 297.5 228.0C300.1 229.1 297.9 235.1 295.3 236.8C292.8 238.4 284.7 238.9 282.2 237.8C279.6 236.8 277.5 231.8 280.0 230.2Z"/><path d="M234.1 234.6C235.7 233.5 243.5 232.4 245.0 233.5C246.5 234.6 244.5 240.0 242.8 241.1C241.2 242.2 236.6 241.1 235.2 240.0C233.7 238.9 232.4 235.7 234.1 234.6Z"/><path d="M242.8 269.6C243.9 266.3 252.7 268.5 255.9 271.8C259.2 275.0 263.6 286.0 262.5 289.3C261.4 292.5 252.7 294.7 249.4 291.4C246.1 288.2 241.7 272.8 242.8 269.6Z"/><path d="M210.0 269.6C211.1 267.9 215.1 269.2 216.6 270.7C218.0 272.1 219.8 276.7 218.8 278.3C217.7 280.0 211.5 282.0 210.0 280.5C208.5 279.0 208.9 271.2 210.0 269.6Z"/><path d="M284.4 244.4C285.8 242.8 292.6 242.0 294.2 243.3C295.9 244.6 295.7 250.4 294.2 252.1C292.8 253.7 287.1 254.4 285.5 253.2C283.8 251.9 282.9 246.0 284.4 244.4Z"/><path d="M509.7 282.7C514.1 280.1 519.5 278.7 525.0 280.5C530.5 282.3 540.3 290.0 542.5 293.6C544.7 297.3 544.7 300.9 538.1 302.4C531.6 303.8 509.7 303.5 503.1 302.4C496.6 301.3 497.7 299.1 498.8 295.8C499.9 292.5 505.3 285.2 509.7 282.7Z"/><path d="M599.4 241.1C604.1 237.1 624.9 228.7 630.0 238.9C635.1 249.1 633.7 291.8 630.0 302.4C626.4 313.0 610.7 304.6 608.1 302.4C605.6 300.2 614.3 293.6 614.7 289.3C615.1 284.9 612.5 280.5 610.3 276.1C608.1 271.8 603.4 268.8 601.6 263.0C599.8 257.2 594.7 245.1 599.4 241.1Z"/><path d="M463.8 228.0C465.4 227.3 473.2 227.3 474.7 228.0C476.2 228.7 474.1 231.6 472.5 232.4C470.9 233.1 466.3 233.1 464.8 232.4C463.4 231.6 462.1 228.7 463.8 228.0Z"/><path d="M573.1 241.1C575.3 238.9 587.4 238.6 590.6 241.1C593.9 243.7 595.0 254.3 592.8 256.4C590.6 258.6 580.8 256.8 577.5 254.3C574.2 251.7 571.0 243.3 573.1 241.1Z"/></g></g><g filter="url(#lacyD)"><rect x="0" y="0" width="630" height="318" fill="none"/><g fill="#d7e9c8" opacity="0.97"><path d="M318.9 0.0C330.7 -3.0 378.5 -2.2 392.2 0.0C405.9 2.2 401.9 8.9 401.1 13.3C400.4 17.8 388.9 21.5 387.8 26.7C386.7 31.9 394.4 38.9 394.4 44.4C394.4 50.0 391.1 57.0 387.8 60.0C384.4 63.0 378.5 63.0 374.4 62.2C370.4 61.5 367.8 56.7 363.3 55.6C358.9 54.4 353.3 56.1 347.8 55.6C342.2 55.0 330.7 54.4 330.0 52.2C329.3 50.0 344.1 45.4 343.3 42.2C342.6 39.1 329.3 37.4 325.6 33.3C321.9 29.3 322.2 23.3 321.1 17.8C320.0 12.2 307.0 3.0 318.9 0.0Z"/><path d="M370.0 75.6C370.7 73.3 380.7 68.5 385.6 68.9C390.4 69.3 393.1 77.0 398.9 77.8C404.6 78.5 416.5 66.3 420.0 73.3C423.5 80.4 422.4 112.2 420.0 120.0C417.6 127.8 408.0 122.6 405.6 120.0C403.1 117.4 408.5 108.1 405.6 104.4C402.6 100.7 389.6 100.4 387.8 97.8C385.9 95.2 395.6 91.5 394.4 88.9C393.3 86.3 385.2 84.4 381.1 82.2C377.0 80.0 369.3 77.8 370.0 75.6Z"/><path d="M420.0 41.1C424.1 35.1 438.5 42.1 444.4 44.0C450.4 45.9 454.1 48.4 455.6 52.2C457.0 56.0 454.8 62.4 453.3 66.7C451.9 70.9 450.0 74.8 446.7 77.8C443.3 80.7 437.8 84.1 433.3 84.4C428.9 84.8 422.2 87.2 420.0 80.0C417.8 72.8 415.9 47.1 420.0 41.1Z"/><path d="M420.0 80.0C421.5 74.8 427.8 84.8 428.9 88.9C430.0 93.0 425.9 99.3 426.7 104.4C427.4 109.6 434.4 117.4 433.3 120.0C432.2 122.6 422.2 126.7 420.0 120.0C417.8 113.3 418.5 85.2 420.0 80.0Z"/><path d="M22.2 124.4C23.0 122.6 30.7 124.6 33.3 126.7C35.9 128.7 38.5 134.8 37.8 136.7C37.0 138.5 31.5 139.8 28.9 137.8C26.3 135.7 21.5 126.3 22.2 124.4Z"/><path d="M47.8 153.3C49.3 150.4 55.9 148.7 57.8 151.1C59.6 153.5 60.4 164.8 58.9 167.8C57.4 170.7 50.7 171.3 48.9 168.9C47.0 166.5 46.3 156.3 47.8 153.3Z"/><path d="M38.9 172.2C40.2 170.9 46.3 171.5 47.8 173.3C49.3 175.2 49.1 182.0 47.8 183.3C46.5 184.6 41.5 183.0 40.0 181.1C38.5 179.3 37.6 173.5 38.9 172.2Z"/><path d="M363.3 128.9C365.9 126.9 372.4 126.3 374.4 127.8C376.5 129.3 377.0 135.4 375.6 137.8C374.1 140.2 368.3 141.9 365.6 142.2C362.8 142.6 359.3 142.2 358.9 140.0C358.5 137.8 360.7 130.9 363.3 128.9Z"/><path d="M460.0 126.7C462.2 123.3 466.7 121.1 475.6 120.0C484.4 118.9 507.8 117.8 513.3 120.0C518.9 122.2 511.5 129.6 508.9 133.3C506.3 137.0 501.5 141.1 497.8 142.2C494.1 143.3 489.3 138.9 486.7 140.0C484.1 141.1 484.4 149.3 482.2 148.9C480.0 148.5 476.7 139.3 473.3 137.8C470.0 136.3 464.4 141.9 462.2 140.0C460.0 138.1 457.8 130.0 460.0 126.7Z"/><path d="M493.3 146.7C496.3 142.6 507.0 142.2 513.3 140.0C519.6 137.8 527.4 132.6 531.1 133.3C534.8 134.1 536.3 140.7 535.6 144.4C534.8 148.1 527.8 150.7 526.7 155.6C525.6 160.4 530.4 168.5 528.9 173.3C527.4 178.1 521.1 184.8 517.8 184.4C514.4 184.1 512.6 174.4 508.9 171.1C505.2 167.8 498.1 168.5 495.6 164.4C493.0 160.4 490.4 150.7 493.3 146.7Z"/><path d="M511.1 191.1C514.1 188.5 529.3 192.6 535.6 193.3C541.9 194.1 547.4 193.0 548.9 195.6C550.4 198.1 543.0 205.2 544.4 208.9C545.9 212.6 557.8 212.6 557.8 217.8C557.8 223.0 551.5 236.3 544.4 240.0C537.4 243.7 521.1 242.6 515.6 240.0C510.0 237.4 510.7 229.6 511.1 224.4C511.5 219.3 517.8 214.4 517.8 208.9C517.8 203.3 508.1 193.7 511.1 191.1Z"/><path d="M544.4 171.1C544.1 167.0 551.1 163.3 553.3 164.4C555.6 165.6 554.8 174.1 557.8 177.8C560.7 181.5 567.4 182.2 571.1 186.7C574.8 191.1 577.0 200.0 580.0 204.4C583.0 208.9 588.1 210.0 588.9 213.3C589.6 216.7 586.7 223.7 584.4 224.4C582.2 225.2 577.4 222.6 575.6 217.8C573.7 213.0 576.7 200.4 573.3 195.6C570.0 190.7 560.4 193.0 555.6 188.9C550.7 184.8 544.8 175.2 544.4 171.1Z"/><path d="M573.3 160.0C574.8 157.0 584.8 157.0 588.9 157.8C593.0 158.5 592.6 162.2 597.8 164.4C603.0 166.7 614.6 168.9 620.0 171.1C625.4 173.3 628.3 171.5 630.0 177.8C631.7 184.1 632.4 204.1 630.0 208.9C627.6 213.7 620.2 208.9 615.6 206.7C610.9 204.4 606.7 198.5 602.2 195.6C597.8 192.6 592.6 192.2 588.9 188.9C585.2 185.6 582.6 180.4 580.0 175.6C577.4 170.7 571.9 163.0 573.3 160.0Z"/><path d="M433.3 147.8C434.4 146.3 448.5 144.1 453.3 144.4C458.1 144.8 463.3 148.5 462.2 150.0C461.1 151.5 451.5 153.7 446.7 153.3C441.9 153.0 432.2 149.3 433.3 147.8Z"/><path d="M514.1 228.0C518.1 224.4 536.3 225.8 542.5 228.0C548.7 230.2 551.3 237.1 551.3 241.1C551.3 245.1 543.2 248.1 542.5 252.1C541.8 256.1 547.6 259.7 546.9 265.2C546.2 270.7 541.8 279.0 538.1 284.9C534.5 290.7 529.4 297.3 525.0 300.2C520.6 303.1 513.7 304.9 511.9 302.4C510.1 299.8 512.2 290.7 514.1 284.9C515.9 279.0 522.1 273.2 522.8 267.4C523.6 261.5 519.9 256.4 518.4 249.9C517.0 243.3 510.1 231.6 514.1 228.0Z"/><path d="M551.3 256.4C551.6 254.3 557.8 259.7 560.0 263.0C562.2 266.3 561.5 272.8 564.4 276.1C567.3 279.4 574.6 278.3 577.5 282.7C580.4 287.1 582.6 299.1 581.9 302.4C581.2 305.7 575.3 304.6 573.1 302.4C571.0 300.2 571.3 293.6 568.8 289.3C566.2 284.9 560.7 281.6 557.8 276.1C554.9 270.7 550.9 258.6 551.3 256.4Z"/><path d="M590.6 241.1C591.4 238.9 595.4 239.7 597.2 243.3C599.0 247.0 599.4 257.2 601.6 263.0C603.8 268.8 608.1 273.9 610.3 278.3C612.5 282.7 615.4 287.8 614.7 289.3C614.0 290.7 608.9 290.0 606.0 287.1C603.0 284.2 599.4 276.9 597.2 271.8C595.0 266.6 593.9 261.5 592.8 256.4C591.7 251.3 589.9 243.3 590.6 241.1Z"/></g></g><g fill="#eeeae7" opacity="0.5"><ellipse cx="264.4" cy="64.4" rx="5.0" ry="3.7"/><ellipse cx="268.9" cy="106.7" rx="5.0" ry="5.6"/><ellipse cx="490.7" cy="84.4" rx="3.7" ry="5.0"/><ellipse cx="80.0" cy="161.1" rx="4.3" ry="4.3"/><ellipse cx="138.9" cy="200.0" rx="4.3" ry="6.2"/><ellipse cx="131.1" cy="224.4" rx="5.6" ry="3.7"/><ellipse cx="271.1" cy="167.8" rx="4.3" ry="3.7"/><ellipse cx="318.9" cy="130.0" rx="5.0" ry="5.0"/><ellipse cx="381.1" cy="206.7" rx="5.6" ry="5.6"/><ellipse cx="122.5" cy="282.7" rx="35.0" ry="22.0"/><ellipse cx="109.4" cy="267.4" rx="14.0" ry="10.0"/><ellipse cx="83.1" cy="293.6" rx="16.0" ry="10.0"/><ellipse cx="153.1" cy="293.6" rx="22.0" ry="14.0"/><ellipse cx="13.1" cy="276.1" rx="18.0" ry="10.0"/><ellipse cx="182.7" cy="283.8" rx="14.0" ry="10.0"/><ellipse cx="376.3" cy="255.3" rx="8.7" ry="6.2"/><ellipse cx="432.0" cy="275.0" rx="6.2" ry="5.0"/></g><g fill="none" stroke="#f6dcc2" stroke-width="0.7" opacity="0.72"><path d="M0.0 66.7C4.4 67.8 17.0 73.3 26.7 73.3C36.3 73.3 46.3 68.9 57.8 66.7C69.3 64.4 89.3 61.1 95.6 60.0"/><path d="M124.4 63.3C127.4 65.4 134.8 71.3 142.2 75.6C149.6 79.8 161.1 84.1 168.9 88.9C176.7 93.7 182.0 100.0 188.9 104.4C195.7 108.9 206.5 113.7 210.0 115.6"/><path d="M104.4 64.4C107.8 67.8 118.1 77.8 124.4 84.4C130.7 91.1 137.0 98.5 142.2 104.4C147.4 110.4 153.3 117.4 155.6 120.0"/><path d="M124.4 60.0C129.6 57.4 145.6 50.7 155.6 44.4C165.6 38.1 177.0 27.4 184.4 22.2C191.9 17.0 197.4 14.8 200.0 13.3"/><path d="M40.0 120.0C41.5 115.6 45.2 100.0 48.9 93.3C52.6 86.7 58.1 83.7 62.2 80.0C66.3 76.3 71.5 72.6 73.3 71.1"/><path d="M124.4 62.2C125.9 59.3 130.4 51.1 133.3 44.4C136.3 37.8 138.5 29.6 142.2 22.2C145.9 14.8 153.3 3.7 155.6 0.0"/><path d="M210.0 40.0C212.2 42.2 218.1 50.0 223.3 53.3C228.5 56.7 235.4 58.1 241.1 60.0C246.9 61.9 255.0 63.7 257.8 64.4"/><path d="M210.0 26.7C213.0 25.2 221.9 20.0 227.8 17.8C233.7 15.6 241.9 15.6 245.6 13.3C249.3 11.1 249.3 5.9 250.0 4.4"/><path d="M272.2 65.6C275.9 65.7 287.4 68.3 294.4 66.7C301.5 65.0 307.8 59.3 314.4 55.6C321.1 51.9 328.1 48.1 334.4 44.4C340.7 40.7 347.4 35.2 352.2 33.3C357.0 31.5 361.5 33.3 363.3 33.3"/><path d="M318.9 51.1C319.3 47.4 320.0 35.2 321.1 28.9C322.2 22.6 324.1 18.1 325.6 13.3C327.0 8.5 329.3 2.2 330.0 0.0"/><path d="M325.6 120.0C327.0 116.3 330.0 104.8 334.4 97.8C338.9 90.7 347.8 83.0 352.2 77.8C356.7 72.6 359.3 70.4 361.1 66.7C363.0 63.0 363.0 57.4 363.3 55.6"/><path d="M361.1 66.7C363.0 70.4 369.3 82.6 372.2 88.9C375.2 95.2 378.3 99.3 378.9 104.4C379.4 109.6 376.1 117.4 375.6 120.0"/><path d="M210.0 87.8C213.3 88.1 224.4 91.7 230.0 90.0C235.6 88.3 238.7 81.3 243.3 77.8C248.0 74.3 255.4 70.4 257.8 68.9"/><path d="M252.2 6.7C253.3 9.3 258.0 15.9 258.9 22.2C259.8 28.5 258.0 40.7 257.8 44.4"/><path d="M325.6 17.8C328.5 18.9 337.0 21.9 343.3 24.4C349.6 27.0 357.4 32.6 363.3 33.3C369.3 34.1 374.1 32.2 378.9 28.9C383.7 25.6 390.0 15.9 392.2 13.3"/><path d="M420.0 86.7C423.0 86.3 433.3 82.6 437.8 84.4C442.2 86.3 446.3 91.9 446.7 97.8C447.0 103.7 441.1 116.3 440.0 120.0"/><path d="M531.1 106.7C534.8 107.4 546.7 108.9 553.3 111.1C560.0 113.3 568.1 118.5 571.1 120.0"/><path d="M571.1 93.3L584.4 104.4"/><path d="M0.0 128.9C3.0 131.5 10.4 143.7 17.8 144.4C25.2 145.2 35.2 136.7 44.4 133.3C53.7 130.0 64.4 126.3 73.3 124.4C82.2 122.6 93.7 122.6 97.8 122.2"/><path d="M57.8 120.0C58.9 123.7 61.3 136.3 64.4 142.2C67.6 148.1 74.6 153.3 76.7 155.6"/><path d="M22.2 153.3C25.9 154.4 38.0 157.6 44.4 160.0C50.9 162.4 58.3 166.5 61.1 167.8"/><path d="M0.0 208.9C3.7 206.7 14.8 199.3 22.2 195.6C29.6 191.9 37.0 190.0 44.4 186.7C51.9 183.3 63.0 177.4 66.7 175.6"/><path d="M113.3 120.0C115.2 123.3 120.7 134.4 124.4 140.0C128.1 145.6 134.1 147.8 135.6 153.3C137.0 158.9 133.7 170.0 133.3 173.3"/><path d="M88.9 171.1C90.4 174.8 93.3 187.0 97.8 193.3C102.2 199.6 109.6 204.8 115.6 208.9C121.5 213.0 130.4 216.3 133.3 217.8"/><path d="M146.7 176.7C149.6 175.7 158.1 172.0 164.4 171.1C170.7 170.2 176.9 170.7 184.4 171.1C192.0 171.5 205.7 173.0 210.0 173.3"/><path d="M142.2 208.9C146.7 210.4 157.6 217.4 168.9 217.8C180.2 218.1 203.1 212.2 210.0 211.1"/><path d="M44.4 215.6C45.2 211.9 45.2 200.0 48.9 193.3C52.6 186.7 63.7 178.5 66.7 175.6"/><path d="M210.0 172.2C214.4 172.0 227.0 170.9 236.7 171.1C246.3 171.3 258.9 172.6 267.8 173.3C276.7 174.1 281.1 172.2 290.0 175.6C298.9 178.9 315.9 190.4 321.1 193.3"/><path d="M270.0 184.4C271.1 188.5 274.4 199.6 276.7 208.9C278.9 218.1 282.2 234.8 283.3 240.0"/><path d="M261.1 135.6C263.3 138.5 271.9 147.8 274.4 153.3C277.0 158.9 276.3 166.3 276.7 168.9"/><path d="M210.0 126.7C213.3 126.3 222.6 125.6 230.0 124.4C237.4 123.3 250.4 120.7 254.4 120.0"/><path d="M321.1 193.3C324.8 193.7 335.9 193.7 343.3 195.6C350.7 197.4 359.6 202.6 365.6 204.4C371.5 206.3 376.7 206.3 378.9 206.7"/><path d="M238.9 203.3C238.5 206.5 236.3 216.1 236.7 222.2C237.0 228.3 240.4 237.0 241.1 240.0"/><path d="M321.1 131.1C323.3 133.0 328.9 136.7 334.4 142.2C340.0 147.8 349.3 158.5 354.4 164.4C359.6 170.4 363.7 175.6 365.6 177.8"/><path d="M387.8 204.4L420.0 200.0"/><path d="M420.0 197.8C423.7 197.0 434.8 197.4 442.2 193.3C449.6 189.3 455.9 177.0 464.4 173.3C473.0 169.6 488.1 173.7 493.3 171.1C498.5 168.5 493.0 162.2 495.6 157.8C498.1 153.3 506.7 146.7 508.9 144.4"/><path d="M464.4 173.3C463.7 179.3 461.1 197.8 460.0 208.9C458.9 220.0 458.1 234.8 457.8 240.0"/><path d="M493.3 160.0C496.7 160.7 506.3 163.3 513.3 164.4C520.4 165.6 528.9 168.1 535.6 166.7C542.2 165.2 548.9 158.5 553.3 155.6C557.8 152.6 562.2 153.3 562.2 148.9C562.2 144.4 554.8 132.2 553.3 128.9"/><path d="M562.2 148.9C564.4 150.4 570.4 156.7 575.6 157.8C580.7 158.9 585.9 155.2 593.3 155.6C600.7 155.9 615.6 159.3 620.0 160.0"/><path d="M420.0 222.2C423.7 222.6 435.6 221.5 442.2 224.4C448.9 227.4 457.0 237.4 460.0 240.0"/><path d="M562.2 180.0C564.4 182.2 571.1 187.8 575.6 193.3C580.0 198.9 586.3 206.3 588.9 213.3C591.5 220.4 590.7 231.9 591.1 235.6"/><path d="M433.3 151.1C435.9 153.7 443.7 163.0 448.9 166.7C454.1 170.4 461.9 172.2 464.4 173.3"/><path d="M0.0 278.3C3.6 279.4 14.6 282.3 21.9 284.9C29.2 287.4 36.5 291.1 43.8 293.6C51.0 296.2 62.0 299.1 65.6 300.2"/><path d="M13.1 265.2C14.6 262.6 18.6 254.6 21.9 249.9C25.2 245.1 29.2 240.4 32.8 236.8C36.5 233.1 41.9 229.5 43.8 228.0"/><path d="M43.8 272.8C44.5 270.1 44.5 260.3 48.1 256.4C51.8 252.6 62.7 251.0 65.6 249.9"/><path d="M122.5 265.2C124.7 266.3 131.3 269.9 135.6 271.8C140.0 273.6 146.6 275.4 148.8 276.1"/><path d="M170.6 260.8C171.4 263.4 174.3 269.9 175.0 276.1C175.7 282.3 175.0 294.4 175.0 298.0"/><path d="M181.6 249.9C183.4 252.1 190.0 257.7 192.5 263.0C195.1 268.3 196.2 278.5 196.9 281.6"/><path d="M83.1 258.6C83.9 256.4 84.2 248.8 87.5 245.5C90.8 242.2 100.3 240.0 102.8 238.9"/><path d="M26.3 293.6C27.7 295.5 32.1 301.3 35.0 304.6C37.9 307.9 42.3 311.9 43.8 313.3"/><path d="M131.3 280.5C132.7 282.7 138.6 289.6 140.0 293.6C141.5 297.6 140.0 302.7 140.0 304.6"/><path d="M151.0 254.3C153.5 253.9 161.2 252.8 166.3 252.1C171.4 251.3 179.0 250.2 181.6 249.9"/><path d="M282.2 247.7C282.2 249.5 280.0 252.4 282.2 258.6C284.4 264.8 292.4 279.0 295.3 284.9C298.2 290.7 299.0 292.2 299.7 293.6"/><path d="M210.0 280.5C214.4 280.9 226.8 281.2 236.3 282.7C245.7 284.2 256.7 287.6 266.9 289.3C277.1 290.9 286.6 291.8 297.5 292.5C308.4 293.3 319.4 293.4 332.5 293.6C345.6 293.8 361.7 294.4 376.3 293.6C390.9 292.9 412.7 290.0 420.0 289.3"/><path d="M280.0 257.5C284.0 257.2 295.3 257.0 304.1 255.3C312.8 253.7 322.7 248.2 332.5 247.7C342.4 247.1 355.8 250.6 363.1 252.1C370.4 253.5 366.8 253.9 376.3 256.4C385.7 259.0 412.7 265.6 420.0 267.4"/><path d="M245.0 263.0C244.6 265.9 244.3 274.3 242.8 280.5C241.4 286.7 237.3 296.9 236.3 300.2"/><path d="M332.5 311.1C334.7 307.9 340.5 298.0 345.6 291.4C350.7 284.9 358.0 277.6 363.1 271.8C368.2 265.9 374.1 259.0 376.3 256.4"/><path d="M210.0 315.5C215.8 315.3 231.9 314.0 245.0 314.4C258.1 314.8 281.5 317.1 288.8 317.7"/><path d="M304.1 295.8C305.5 297.6 308.8 304.2 312.8 306.8C316.8 309.3 325.6 310.4 328.1 311.1"/><path d="M420.0 236.8C424.4 237.5 439.0 241.9 446.3 241.1C453.5 240.4 458.6 234.6 463.8 232.4C468.9 230.2 474.7 228.7 476.9 228.0"/><path d="M457.2 260.8C461.9 264.1 477.2 275.0 485.6 280.5C494.0 286.0 503.9 291.4 507.5 293.6"/><path d="M511.9 249.9C512.2 255.7 516.3 276.1 514.1 284.9C511.9 293.6 501.3 299.5 498.8 302.4"/><path d="M459.4 228.0C458.3 230.9 455.4 240.4 452.8 245.5C450.3 250.6 445.5 256.4 444.1 258.6"/><path d="M577.5 243.3C577.2 248.1 574.6 264.8 575.3 271.8C576.1 278.7 580.8 282.7 581.9 284.9"/><path d="M630.0 282.7C627.8 284.5 619.8 290.3 616.9 293.6C614.0 296.9 613.2 300.9 612.5 302.4"/><path d="M546.9 228.0C548.3 229.5 550.5 234.2 555.6 236.8C560.7 239.3 573.9 242.2 577.5 243.3"/></g><g fill="none" stroke="#f5c78e" stroke-width="1.1" stroke-linecap="round" stroke-linejoin="round"><path d="M0.0 260.8C2.2 261.5 8.4 263.4 13.1 265.2C17.9 267.0 23.3 270.5 28.4 271.8C33.5 273.0 39.0 271.8 43.8 272.8C48.5 273.9 53.2 276.1 56.9 278.3C60.5 280.5 62.0 284.5 65.6 286.0C69.3 287.4 74.0 287.1 78.8 287.1C83.5 287.1 89.7 287.1 94.1 286.0C98.4 284.9 101.7 281.8 105.0 280.5C108.3 279.2 112.3 278.7 113.8 278.3"/><path d="M28.4 228.0C29.9 229.1 33.5 232.4 37.2 234.6C40.8 236.8 45.6 238.6 50.3 241.1C55.1 243.7 60.2 247.0 65.6 249.9C71.1 252.8 78.0 256.1 83.1 258.6C88.2 261.2 92.6 263.0 96.3 265.2C99.9 267.4 102.8 269.6 105.0 271.8C107.2 273.9 108.7 277.2 109.4 278.3"/><path d="M102.8 228.0C103.2 229.8 103.9 236.0 105.0 238.9C106.1 241.9 107.2 242.9 109.4 245.5C111.6 248.1 115.9 251.0 118.1 254.3C120.3 257.5 122.1 261.2 122.5 265.2C122.9 269.2 120.7 276.1 120.3 278.3"/><path d="M105.0 243.3C103.9 244.8 99.9 248.4 98.4 252.1C97.0 255.7 96.6 263.0 96.3 265.2"/><path d="M109.4 245.5C111.6 245.9 118.1 246.6 122.5 247.7C126.9 248.8 131.3 250.6 135.6 252.1C140.0 253.5 146.6 255.7 148.8 256.4"/><path d="M157.5 228.0C156.4 229.8 152.0 234.6 151.0 238.9C149.9 243.3 151.3 249.9 151.0 254.3C150.6 258.6 150.6 261.9 148.8 265.2C146.9 268.5 142.9 271.4 140.0 273.9C137.1 276.5 132.7 279.4 131.3 280.5"/><path d="M210.0 241.1C207.8 241.5 201.6 241.9 196.9 243.3C192.2 244.8 186.0 247.0 181.6 249.9C177.2 252.8 174.3 257.5 170.6 260.8C167.0 264.1 163.3 267.0 159.7 269.6C156.1 272.1 150.6 275.0 148.8 276.1"/><path d="M151.0 238.9C149.5 239.3 144.8 241.5 142.2 241.1C139.6 240.8 137.5 238.9 135.6 236.8C133.8 234.6 132.0 229.5 131.3 228.0"/><path d="M148.8 276.1C151.0 277.2 159.0 279.8 161.9 282.7C164.8 285.6 164.1 291.1 166.3 293.6C168.5 296.2 171.0 297.6 175.0 298.0C179.0 298.4 184.5 296.9 190.3 295.8C196.2 294.7 206.7 292.2 210.0 291.4"/><path d="M65.6 286.0C66.0 287.6 65.6 292.7 67.8 295.8C70.0 298.9 74.7 302.4 78.8 304.6C82.8 306.8 87.5 308.6 91.9 308.9C96.3 309.3 102.8 307.1 105.0 306.8"/><path d="M0.0 315.5C2.9 315.3 10.2 314.8 17.5 314.4C24.8 314.0 35.4 313.3 43.8 313.3C52.1 313.3 61.3 314.8 67.8 314.4C74.4 314.0 80.6 311.7 83.1 311.1"/><path d="M140.0 304.6C142.9 304.8 151.7 305.7 157.5 305.7C163.3 305.7 169.2 304.9 175.0 304.6C180.9 304.2 186.7 303.8 192.5 303.5C198.4 303.1 207.1 302.6 210.0 302.4"/><path d="M161.9 306.8C162.1 308.2 163.2 313.7 163.0 315.5C162.8 317.3 161.2 317.3 160.8 317.7"/><path d="M196.9 281.6C198.0 282.5 202.2 285.1 203.5 287.1C204.7 289.1 204.4 292.5 204.6 293.6"/><path d="M118.1 254.3C120.3 255.3 127.3 259.0 131.3 260.8C135.3 262.6 140.4 264.5 142.2 265.2"/><path d="M78.8 287.1C80.2 288.2 84.6 291.4 87.5 293.6C90.4 295.8 93.3 298.4 96.3 300.2C99.2 302.0 103.6 303.8 105.0 304.6"/><path d="M56.9 278.3C56.5 280.1 54.3 286.0 54.7 289.3C55.1 292.5 56.9 295.5 59.1 298.0C61.3 300.6 66.4 303.5 67.8 304.6"/></g><g fill="none" stroke="#f5c589" stroke-width="1.5" stroke-linecap="round" stroke-linejoin="round"><path d="M0.0 92.2C3.7 90.6 14.8 85.4 22.2 82.2C29.6 79.1 35.9 75.6 44.4 73.3C53.0 71.1 64.8 71.1 73.3 68.9C81.9 66.7 90.4 60.9 95.6 60.0C100.7 59.1 100.0 63.0 104.4 63.3C108.9 63.7 113.7 62.3 122.2 62.2C130.7 62.1 143.7 62.5 155.6 62.9C167.4 63.3 184.3 63.8 193.3 64.4C202.4 65.1 207.2 66.3 210.0 66.7"/><path d="M201.1 0.0C201.3 3.7 203.1 13.0 202.2 22.2C201.3 31.5 197.4 44.4 195.6 55.6C193.7 66.7 193.3 78.1 191.1 88.9C188.9 99.6 183.7 114.8 182.2 120.0"/><path d="M104.0 64.4C103.7 68.5 103.3 79.6 102.2 88.9C101.2 98.1 98.5 114.8 97.8 120.0"/><path d="M33.3 0.0C35.2 1.1 37.8 3.3 44.4 6.7C51.1 10.0 64.8 15.2 73.3 20.0C81.9 24.8 90.4 31.5 95.6 35.6C100.7 39.6 101.9 41.7 104.4 44.4C107.0 47.2 108.3 49.4 111.1 52.2C113.9 55.0 119.4 59.6 121.1 61.1"/><path d="M115.6 0.0C115.6 3.7 116.3 16.3 115.6 22.2C114.8 28.1 112.6 31.5 111.1 35.6C109.6 39.6 108.3 42.6 106.7 46.7C105.0 50.7 102.0 57.8 101.1 60.0"/><path d="M210.0 16.7C211.9 15.6 217.2 12.8 221.1 10.0C225.0 7.2 231.3 1.7 233.3 0.0"/><path d="M245.6 0.0C246.1 2.2 248.0 8.5 248.9 13.3C249.8 18.1 249.6 23.3 251.1 28.9C252.6 34.4 256.3 41.9 257.8 46.7C259.3 51.5 260.0 54.6 260.0 57.8C260.0 60.9 258.1 64.3 257.8 65.6"/><path d="M210.0 66.7C213.0 66.9 223.3 68.0 227.8 67.8C232.2 67.5 231.7 65.5 236.7 65.1C241.7 64.7 254.3 65.5 257.8 65.6"/><path d="M257.8 65.6C259.1 66.9 262.4 69.8 265.6 73.3C268.7 76.9 273.0 82.2 276.7 86.7C280.4 91.1 283.3 95.9 287.8 100.0C292.2 104.1 298.1 107.8 303.3 111.1C308.5 114.4 316.3 118.5 318.9 120.0"/><path d="M265.6 73.3C265.4 75.9 265.0 83.7 264.4 88.9C263.9 94.1 263.0 99.3 262.2 104.4C261.5 109.6 260.4 117.4 260.0 120.0"/><path d="M457.8 42.2C457.4 44.4 455.7 50.7 455.6 55.6C455.4 60.4 455.2 67.0 456.7 71.1C458.1 75.2 461.3 77.6 464.4 80.0C467.6 82.4 472.0 83.3 475.6 85.6C479.1 87.8 484.0 90.8 485.6 93.3C487.1 95.9 486.4 98.4 485.1 100.7C483.8 102.9 480.1 104.6 477.8 106.7C475.4 108.8 473.7 111.5 471.1 113.3C468.5 115.2 464.1 116.7 462.2 117.8C460.4 118.9 460.4 119.6 460.0 120.0"/><path d="M485.6 93.3C487.2 93.0 491.7 90.7 495.6 91.1C499.4 91.5 505.2 94.1 508.9 95.6C512.6 97.0 514.1 98.5 517.8 100.0C521.5 101.5 528.5 105.9 531.1 104.4C533.7 103.0 531.9 94.3 533.3 91.1C534.8 88.0 538.5 87.6 540.0 85.6C541.5 83.5 541.9 80.0 542.2 78.9"/><path d="M97.8 120.0C97.4 122.2 96.7 128.5 95.6 133.3C94.4 138.1 92.8 143.3 91.1 148.9C89.4 154.4 87.0 161.1 85.6 166.7C84.1 172.2 83.7 177.0 82.2 182.2C80.7 187.4 76.5 192.6 76.7 197.8C76.9 203.0 79.8 208.9 83.3 213.3C86.9 217.8 94.3 220.0 97.8 224.4C101.3 228.9 103.3 237.4 104.4 240.0"/><path d="M85.6 166.7C88.0 166.9 94.6 167.2 100.0 167.8C105.4 168.3 112.2 168.7 117.8 170.0C123.3 171.3 128.5 174.4 133.3 175.6C138.1 176.7 144.4 176.5 146.7 176.7"/><path d="M85.6 167.8C84.3 168.9 80.6 173.1 77.8 174.4C75.0 175.7 71.7 176.7 68.9 175.6C66.1 174.4 62.4 169.1 61.1 167.8"/><path d="M85.6 166.7C84.1 164.8 79.3 158.5 76.7 155.6C74.1 152.6 71.1 150.0 70.0 148.9"/><path d="M182.2 120.0C181.5 123.7 179.3 134.8 177.8 142.2C176.3 149.6 174.3 157.0 173.3 164.4C172.4 171.9 172.2 180.7 172.2 186.7C172.2 192.6 174.6 195.6 173.3 200.0C172.0 204.4 167.0 208.9 164.4 213.3C161.9 217.8 159.6 222.2 157.8 226.7C155.9 231.1 154.1 237.8 153.3 240.0"/><path d="M133.3 182.2C133.7 184.1 134.3 189.3 135.6 193.3C136.9 197.4 140.6 202.6 141.1 206.7C141.7 210.7 139.4 214.8 138.9 217.8C138.3 220.7 138.0 223.3 137.8 224.4"/><path d="M141.1 206.7L151.1 215.6"/><path d="M210.0 144.4C208.3 145.6 202.8 148.3 200.0 151.1C197.2 153.9 194.4 159.4 193.3 161.1"/><path d="M160.0 190.0C162.2 189.8 169.3 190.2 173.3 188.9C177.4 187.6 181.1 184.8 184.4 182.2C187.8 179.6 191.9 174.8 193.3 173.3"/><path d="M210.0 228.9C207.6 229.6 199.1 231.5 195.6 233.3C192.0 235.2 190.0 238.9 188.9 240.0"/><path d="M11.1 215.6C11.9 215.9 12.6 215.6 15.6 217.8C18.5 220.0 24.1 225.2 28.9 228.9C33.7 232.6 41.9 238.1 44.4 240.0"/><path d="M15.6 217.8C15.2 220.0 14.1 227.4 13.3 231.1C12.6 234.8 11.5 238.5 11.1 240.0"/><path d="M318.9 120.0C320.4 121.5 323.7 126.7 327.8 128.9C331.9 131.1 338.9 131.5 343.3 133.3C347.8 135.2 351.1 136.3 354.4 140.0C357.8 143.7 361.1 150.0 363.3 155.6C365.6 161.1 365.9 167.4 367.8 173.3C369.6 179.3 372.6 186.3 374.4 191.1C376.3 195.9 378.1 200.4 378.9 202.2"/><path d="M270.0 182.2C272.2 179.3 278.5 168.7 283.3 164.4C288.1 160.2 294.4 160.0 298.9 156.7C303.3 153.3 307.4 148.3 310.0 144.4C312.6 140.6 312.6 135.9 314.4 133.3C316.3 130.7 320.0 129.6 321.1 128.9"/><path d="M210.0 217.8C211.9 216.3 216.3 211.3 221.1 208.9C225.9 206.5 233.3 205.9 238.9 203.3C244.4 200.7 249.6 196.5 254.4 193.3C259.3 190.2 265.6 185.9 267.8 184.4"/><path d="M378.9 206.7C376.7 206.9 370.0 207.0 365.6 207.8C361.1 208.5 356.7 209.1 352.2 211.1C347.8 213.1 342.6 216.7 338.9 220.0C335.2 223.3 333.7 228.5 330.0 231.1C326.3 233.7 321.9 234.1 316.7 235.6C311.5 237.0 301.9 239.3 298.9 240.0"/><path d="M383.3 204.4C385.2 203.3 390.7 201.1 394.4 197.8C398.1 194.4 402.2 188.9 405.6 184.4C408.9 180.0 412.0 174.8 414.4 171.1C416.9 167.4 419.1 163.7 420.0 162.2"/><path d="M381.1 208.9C383.3 210.4 390.4 214.4 394.4 217.8C398.5 221.1 402.2 225.2 405.6 228.9C408.9 232.6 413.0 238.1 414.4 240.0"/><path d="M374.4 213.3C376.7 213.7 383.7 213.7 387.8 215.6C391.9 217.4 397.0 223.0 398.9 224.4"/><path d="M210.0 142.2C210.7 140.7 213.0 135.6 214.4 133.3C215.9 131.1 218.1 129.6 218.9 128.9"/><path d="M301.1 186.7C302.2 186.9 305.9 187.2 307.8 187.8C309.6 188.3 311.5 189.6 312.2 190.0"/><path d="M341.1 196.7L347.8 200.0"/><path d="M268.9 182.2L271.1 188.9"/><path d="M460.0 120.0C458.5 121.9 454.4 127.4 451.1 131.1C447.8 134.8 443.3 140.0 440.0 142.2C436.7 144.4 433.0 143.0 431.1 144.4C429.3 145.9 430.7 148.1 428.9 151.1C427.0 154.1 421.5 160.4 420.0 162.2"/><path d="M591.1 240.0C594.1 239.6 602.4 238.3 608.9 237.8C615.4 237.2 626.5 236.9 630.0 236.7"/><path d="M210.0 289.3C212.2 287.4 217.3 282.9 223.1 278.3C229.0 273.8 238.1 266.1 245.0 261.9C251.9 257.7 258.5 255.5 264.7 253.2C270.9 250.8 276.0 250.1 282.2 247.7C288.4 245.3 295.7 241.3 301.9 238.9C308.1 236.6 314.3 235.3 319.4 233.5C324.5 231.6 330.3 228.9 332.5 228.0"/><path d="M404.7 228.0C406.2 229.8 411.3 234.9 413.5 238.9C415.6 242.9 416.7 248.1 417.8 252.1C418.9 256.1 419.7 261.2 420.0 263.0"/><path d="M420.0 254.3C422.2 255.0 426.9 257.5 433.1 258.6C439.3 259.7 449.9 261.4 457.2 260.8C464.5 260.3 470.7 257.2 476.9 255.3C483.1 253.5 488.2 251.0 494.4 249.9C500.6 248.8 507.5 249.7 514.1 248.8C520.6 247.9 526.8 245.0 533.8 244.4C540.7 243.9 548.3 245.7 555.6 245.5C562.9 245.3 571.0 244.4 577.5 243.3C584.1 242.2 588.5 239.7 595.0 238.9C601.6 238.2 611.1 239.3 616.9 238.9C622.7 238.6 627.8 237.1 630.0 236.8"/><path d="M420.0 249.9C420.4 251.7 420.7 256.4 422.2 260.8C423.6 265.2 425.5 271.8 428.8 276.1C432.0 280.5 437.9 283.1 441.9 287.1C445.9 291.1 449.5 296.2 452.8 300.2C456.1 304.2 460.1 309.3 461.6 311.1"/><path d="M420.7 256.4C420.7 259.0 421.1 265.6 421.1 271.8C421.1 278.0 421.3 287.8 420.9 293.6C420.5 299.5 419.3 302.7 418.7 306.8C418.1 310.8 417.6 315.9 417.4 317.7"/></g><g fill="none" stroke="#85859c" stroke-width="0.85" stroke-dasharray="2.4 0.9 0.7 0.9" opacity="0.95"><path d="M0.0 37.8C1.9 39.3 7.4 43.3 11.1 46.7C14.8 50.0 19.6 53.0 22.2 57.8C24.8 62.6 25.2 70.7 26.7 75.6C28.1 80.4 31.9 82.6 31.1 86.7C30.4 90.7 24.1 94.4 22.2 100.0C20.4 105.6 20.4 116.7 20.0 120.0"/><path d="M411.1 40.0C411.5 43.7 413.5 55.6 413.3 62.2C413.1 68.9 410.0 75.6 410.0 80.0C410.0 84.4 415.2 84.8 413.3 88.9C411.5 93.0 402.0 100.0 398.9 104.4C395.7 108.9 397.4 113.3 394.4 115.6C391.5 117.8 383.3 117.4 381.1 117.8"/><path d="M18.9 121.1C19.4 123.1 20.6 129.4 22.2 133.3C23.9 137.2 27.4 141.9 28.9 144.4C30.4 147.0 32.2 144.8 31.1 148.9C30.0 153.0 22.6 163.0 22.2 168.9C21.9 174.8 27.2 178.9 28.9 184.4C30.6 190.0 33.7 198.1 32.2 202.2C30.7 206.3 21.7 206.3 20.0 208.9C18.3 211.5 20.7 215.2 22.2 217.8C23.7 220.4 24.1 223.0 28.9 224.4C33.7 225.9 43.3 227.8 51.1 226.7C58.9 225.6 69.3 218.1 75.6 217.8C81.9 217.4 84.8 222.6 88.9 224.4C93.0 226.3 96.3 228.9 100.0 228.9C103.7 228.9 107.0 224.1 111.1 224.4C115.2 224.8 120.0 229.3 124.4 231.1C128.9 233.0 133.3 234.1 137.8 235.6C142.2 237.0 148.9 239.3 151.1 240.0"/><path d="M381.1 120.0C382.0 121.1 385.9 123.0 386.7 126.7C387.4 130.4 386.1 136.7 385.6 142.2C385.0 147.8 383.9 153.7 383.3 160.0C382.8 166.3 383.7 176.9 382.2 180.0C380.7 183.1 377.2 180.4 374.4 178.9C371.7 177.4 369.3 172.2 365.6 171.1C361.9 170.0 354.3 170.4 352.2 172.2C350.2 174.1 355.6 180.0 353.3 182.2C351.1 184.4 344.3 183.7 338.9 185.6C333.5 187.4 323.7 189.8 321.1 193.3C318.5 196.9 322.6 202.6 323.3 206.7C324.1 210.7 323.7 214.8 325.6 217.8C327.4 220.7 333.0 222.6 334.4 224.4C335.9 226.3 337.4 227.4 334.4 228.9C331.5 230.4 320.0 231.5 316.7 233.3C313.3 235.2 314.8 238.9 314.4 240.0"/><path d="M98.4 228.0C99.5 228.4 101.7 230.2 105.0 230.2C108.3 230.2 115.9 228.4 118.1 228.0"/><path d="M151.0 236.8C152.0 237.8 154.2 242.2 157.5 243.3C160.8 244.4 167.0 242.2 170.6 243.3C174.3 244.4 176.5 249.1 179.4 249.9C182.3 250.6 185.2 248.4 188.1 247.7C191.1 247.0 193.2 245.1 196.9 245.5C200.5 245.9 207.8 249.1 210.0 249.9"/><path d="M0.0 248.8C0.7 247.5 2.6 243.5 4.4 241.1C6.2 238.8 9.5 236.8 10.9 234.6C12.4 232.4 12.8 229.1 13.1 228.0"/><path d="M0.0 300.2C0.4 301.3 2.2 304.9 2.2 306.8C2.2 308.6 0.4 310.4 0.0 311.1"/><path d="M210.0 249.9C211.5 249.1 215.1 247.1 218.8 245.5C222.4 243.9 227.5 240.4 231.9 240.0C236.3 239.7 242.1 240.6 245.0 243.3C247.9 246.0 249.0 253.0 249.4 256.4C249.7 259.9 245.7 261.5 247.2 264.1C248.6 266.6 254.8 268.7 258.1 271.8C261.4 274.9 263.6 280.3 266.9 282.7C270.2 285.1 275.3 283.4 277.8 286.0C280.4 288.5 279.6 295.1 282.2 298.0C284.7 300.9 290.9 301.3 293.1 303.5C295.3 305.7 295.0 309.9 295.3 311.1"/><path d="M299.7 293.6C301.9 291.4 309.9 284.2 312.8 280.5C315.7 276.9 315.4 274.3 317.2 271.8C319.0 269.2 322.7 267.4 323.8 265.2C324.9 263.0 325.6 260.5 323.8 258.6C321.9 256.8 313.9 256.4 312.8 254.3C311.7 252.1 316.3 249.1 317.2 245.5C318.1 241.9 315.7 235.1 318.3 232.4C320.8 229.6 330.1 229.6 332.5 229.1"/><path d="M284.4 312.2C285.1 312.0 288.0 310.4 288.8 311.1C289.6 311.9 289.1 315.7 289.2 316.6"/></g><g fill="none" stroke="#9191aa" stroke-width="2.6" stroke-linejoin="round"><path d="M405.6 0.0L407.8 4.4L412.7 9.3L405.6 13.8L400.7 17.3L398.9 22.2L401.6 26.2L398.4 31.1L403.8 33.8L408.2 38.2L414.4 37.3L420.0 36.7"/><path d="M420.0 36.7L425.6 37.3L431.1 40.4L437.8 40.0L444.4 42.7L451.1 41.3L457.8 40.0L461.1 36.0L466.7 33.3L475.6 31.1L483.3 28.9L484.4 22.2L482.2 13.3L484.9 8.9L486.7 3.3L493.3 0.0"/><path d="M511.1 0.0L510.0 6.7L505.6 8.9L503.3 13.3L506.7 18.9L505.6 24.4L502.2 28.9L498.9 35.6L498.9 38.9L505.6 39.6L508.9 41.1L511.1 46.7L514.4 51.1L510.0 55.6L508.9 60.0L511.6 66.7L511.1 75.6L508.9 78.9L515.6 78.2L522.2 76.7L531.1 77.8L536.7 82.2L542.2 85.6L547.8 87.8L551.1 94.4L553.3 97.8L557.8 102.2L565.6 103.3L573.3 102.2L578.9 107.8L582.5 111.0L580.8 113.0L577.9 117.2L579.6 121.8L584.2 120.5L585.0 116.8L592.5 120.5L597.5 125.5L598.8 131.8L602.1 132.6L599.2 135.5L603.3 139.7L603.8 142.2L600.4 144.2L604.2 148.8L613.3 145.1L617.5 140.9L623.3 143.0L625.4 146.8L627.5 140.5L631.0 137.0"/></g><path d="M40.5 270.7C41.7 270.1 45.4 268.1 48.1 267.4C50.9 266.6 54.3 265.7 56.9 266.3C59.4 266.8 61.8 268.3 63.4 270.7C65.1 273.0 65.3 278.5 66.7 280.5C68.2 282.5 70.7 283.6 72.2 282.7C73.7 281.8 74.0 277.2 75.5 275.0C76.9 272.8 78.9 270.5 80.9 269.6C83.0 268.7 86.4 269.6 87.5 269.6" fill="none" stroke="#b7d4f0" stroke-width="1.300"/></svg>
<div class="a" style="left:330px;top:92px;width:630px;height:317.6px;overflow:hidden" id="mapo">
<div class="a t" style="left:96.00px;top:50.25px;font-size:9.2px;line-height:9.2px;color:#5a5a5a;text-shadow:0 0 1.500px #fff,0 0 1.500px #fff,0 0 1px #fff;">Amiens</div>
<div class="a t" style="left:173.00px;top:163.85px;font-size:9.2px;line-height:9.2px;color:#5a5a5a;letter-spacing:-0.339px;text-shadow:0 0 1.500px #fff,0 0 1.500px #fff,0 0 1px #fff;">Compiègne</div>
<div class="a t" style="left:255.00px;top:172.75px;font-size:9.2px;line-height:9.2px;color:#5a5a5a;letter-spacing:-0.504px;text-shadow:0 0 1.500px #fff,0 0 1.500px #fff,0 0 1px #fff;">Soissons</div>
<div class="a t" style="left:369.00px;top:202.25px;font-size:9.2px;line-height:9.2px;color:#5a5a5a;letter-spacing:-0.354px;text-shadow:0 0 1.500px #fff,0 0 1.500px #fff,0 0 1px #fff;">Reims</div>
<div class="a t" style="left:510.70px;top:96.05px;font-size:9.2px;line-height:9.2px;color:#5a5a5a;letter-spacing:-0.581px;text-shadow:0 0 1.500px #fff,0 0 1.500px #fff,0 0 1px #fff;">Sedan</div>
<div class="a t" style="left:577.30px;top:226.05px;font-size:9.2px;line-height:9.2px;color:#5a5a5a;letter-spacing:-0.243px;text-shadow:0 0 1.500px #fff,0 0 1.500px #fff,0 0 1px #fff;">Verdun</div>
<div class="a t" style="left:189.20px;top:274.05px;font-size:9.2px;line-height:9.2px;color:#5a5a5a;letter-spacing:-0.163px;text-shadow:0 0 1.500px #fff,0 0 1.500px #fff,0 0 1px #fff;">Meaux</div>
<div class="a t" style="left:207.50px;top:307.85px;font-size:9.2px;line-height:9.2px;color:#5a5a5a;letter-spacing:-0.217px;text-shadow:0 0 1.500px #fff,0 0 1.500px #fff,0 0 1px #fff;">Coulommiers</div>
<div class="a t" style="left:99.00px;top:278.85px;font-size:9.2px;line-height:9.2px;color:#6d6d6d;letter-spacing:-0.260px;text-shadow:0 0 1.500px #fff,0 0 1.500px #fff,0 0 1px #fff;">Saint-Denis</div>
<div class="a t" style="left:67.80px;top:309.85px;font-size:9.2px;line-height:9.2px;color:#5a5a5a;letter-spacing:-0.438px;text-shadow:0 0 1.500px #fff,0 0 1.500px #fff,0 0 1px #fff;">Versailles</div>
<div class="a" style="left:97.70px;top:22.80px;width:25.40px;height:25.40px;border-radius:50%;background:rgba(128,141,165,0.69)"></div>
<div class="a t" style="left:101.52px;top:31.45px;font-size:10.4px;line-height:10.4px;color:#262a33;letter-spacing:-0.200px;">385</div>
<div class="a" style="left:117.40px;top:154.90px;width:28.80px;height:28.80px;border-radius:50%;background:rgba(128,141,165,0.69)"></div>
<div class="a t" style="left:122.92px;top:165.25px;font-size:10.4px;line-height:10.4px;color:#262a33;letter-spacing:-0.200px;">594</div>
<div class="a" style="left:302.20px;top:147.80px;width:24.40px;height:24.40px;border-radius:50%;background:rgba(128,141,165,0.69)"></div>
<div class="a t" style="left:305.52px;top:155.95px;font-size:10.4px;line-height:10.4px;color:#262a33;letter-spacing:-0.200px;">313</div>
<div class="a" style="left:476.70px;top:92.30px;width:16.80px;height:16.80px;border-radius:50%;background:rgba(128,141,165,0.69)"></div>
<div class="a t" style="left:479.22px;top:96.65px;font-size:10.4px;line-height:10.4px;color:#262a33;letter-spacing:-0.200px;">81</div>
<div class="a" style="left:398.20px;top:265.70px;width:21.80px;height:21.80px;border-radius:50%;background:rgba(128,141,165,0.69)"></div>
<div class="a t" style="left:400.22px;top:272.55px;font-size:10.4px;line-height:10.4px;color:#262a33;letter-spacing:-0.200px;">291</div>
<div class="a" style="left:580.20px;top:255.80px;width:16.60px;height:16.60px;border-radius:50%;background:rgba(128,141,165,0.69)"></div>
<div class="a t" style="left:582.62px;top:260.05px;font-size:10.4px;line-height:10.4px;color:#262a33;letter-spacing:-0.200px;">70</div>
<div class="a" style="left:66.25px;top:234.25px;width:30.00px;height:30.00px;border-radius:50%;background:rgba(128,141,165,0.69)"></div>
<div class="a t" style="left:72.37px;top:245.20px;font-size:10.4px;line-height:10.4px;color:#262a33;letter-spacing:-0.200px;">708</div>
<div class="a" style="left:27.00px;top:309.50px;width:26.00px;height:26.00px;border-radius:50%;background:rgba(128,141,165,0.69)"></div>
<div class="a" style="left:119.50px;top:271.20px;width:33.00px;height:33.00px;border-radius:50%;background:rgba(128,141,165,0.69)"></div>
<div class="a" style="left:85.00px;top:290.00px;width:29.20px;height:29.20px;border-radius:50%;background:rgba(128,141,165,0.69)"></div>
<div class="a" style="left:119.70px;top:302.10px;width:33.80px;height:33.80px;border-radius:50%;background:rgba(128,141,165,0.69)"></div>
<div class="a" style="left:98.70px;top:279.80px;width:41.20px;height:41.20px;border-radius:50%;background:rgba(128,141,165,0.69)"></div>
<div class="a t" style="left:107.43px;top:296.35px;font-size:10.4px;line-height:10.4px;color:#262a33;letter-spacing:-0.200px;">1813</div>
<div class="a" style="left:4.899999999999977px;top:4.60px;width:143.6px;height:35.6px;background:rgba(48,46,44,0.84);border-radius:3px"></div>
<div class="a t" style="left:9.60px;top:9.46px;font-size:11.6px;line-height:11.6px;color:#fff;letter-spacing:-0.544px;-webkit-text-stroke:0.22px #fff;">Carte des</div>
<div class="a t" style="left:9.60px;top:22.36px;font-size:11.6px;line-height:11.6px;color:#fff;letter-spacing:-0.445px;-webkit-text-stroke:0.22px #fff;">hospitalisations</div>
<svg class="a" style="left:132.5px;top:19px" width="9" height="6" viewBox="0 0 9 6"><path d="M0.700 0.800L4.500 4.600L8.300 0.800" fill="none" stroke="#fff" stroke-width="1.200"/></svg>
<div class="a" style="left:325px;top:306.20px;width:305px;height:11.4px;background:rgba(255,255,255,0.62)"></div>
<div class="a t" style="left:329.20px;top:308.39px;font-size:7.3px;line-height:7.3px;color:#222;letter-spacing:-0.066px;">Données Santé publique France</div>
<div class="a t" style="left:434.50px;top:308.39px;font-size:7.3px;line-height:7.3px;color:#666;letter-spacing:-0.058px;">| © Etalab © OpenMapTiles © Contributeurs OpenStreetMap</div>
</div>
<div class="a" style="left:330.00px;top:409.60px;width:630.00px;height:106.40px;background:#fff;"></div>
<svg class="a" style="left:336.2px;top:415.95px;overflow:hidden" width="119.4" height="92.6" viewBox="0 0 119.4 92.6"><defs><pattern id="wv0" width="9" height="7.6" patternUnits="userSpaceOnUse"><path d="M0 2.600Q4.500 6.200 9 2.600" fill="none" stroke="#aac8e7" stroke-width="0.900"/></pattern></defs><rect width="119.4" height="92.6" fill="#bdd6ef"/><rect width="119.4" height="92.6" fill="url(#wv0)"/><path d="M1.2 16.4C2.8 16.0 3.7 14.4 10.5 13.8C17.3 13.3 29.3 13.1 41.9 13.1C54.6 13.0 74.7 13.2 86.4 13.5C98.1 13.7 106.8 12.8 112.3 14.6C117.9 16.3 118.7 19.2 119.7 23.8C120.7 28.5 119.9 36.2 118.2 42.3C116.5 48.5 112.1 54.7 109.5 60.9C107.0 67.0 105.4 74.1 103.1 79.4C100.7 84.6 96.9 90.2 95.7 92.3" fill="none" stroke="#a0c0df" stroke-width="1.300" opacity="0.9"/><path d="M1.2 16.4C1.1 20.7 -0.1 34.3 0.8 42.3C1.8 50.4 4.5 58.4 6.8 64.6C9.0 70.7 12.2 74.8 14.2 79.4C16.2 84.0 18.0 90.2 18.8 92.3" fill="none" stroke="#a0c0df" stroke-width="1.300" opacity="0.9"/><path d="M30.8 92.3C33.3 91.4 41.3 88.0 45.7 86.8C50.0 85.6 52.4 85.0 56.8 85.3C61.1 85.6 66.6 87.5 71.6 88.6C76.5 89.8 83.9 91.4 86.4 92.0" fill="none" stroke="#a0c0df" stroke-width="1.100" opacity="0.7"/><path d="M26.2 30.3C27.4 29.4 29.3 28.3 30.8 28.5C32.4 28.6 34.1 30.0 35.5 31.2C36.9 32.5 38.0 34.5 39.2 35.9C40.3 37.3 41.5 37.9 42.3 39.6C43.1 41.3 43.4 43.4 43.8 46.1C44.2 48.7 44.7 52.5 44.7 55.3C44.7 58.1 44.4 60.7 43.8 62.7C43.2 64.7 42.4 66.4 41.0 67.3C39.6 68.3 37.2 68.6 35.5 68.3C33.8 68.0 32.2 67.0 30.8 65.5C29.4 64.0 28.2 61.6 27.1 59.0C26.1 56.4 25.0 53.0 24.4 49.8C23.7 46.5 23.2 42.2 23.1 39.6C23.0 36.9 23.3 35.6 23.8 34.0C24.3 32.5 25.0 31.2 26.2 30.3Z" fill="none" stroke="#a3c4e5" stroke-width="2.400" opacity="0.8"/><path d="M49.4 18.3C50.1 16.6 52.6 14.0 54.0 13.6C55.4 13.3 56.8 14.7 57.7 16.4C58.6 18.1 58.8 21.8 59.5 23.8C60.3 25.8 60.3 27.1 62.3 28.5C64.3 29.8 69.0 31.1 71.6 32.2C74.2 33.2 76.1 33.9 78.1 34.9C80.1 36.0 84.1 38.1 83.6 38.6C83.2 39.2 77.9 38.4 75.3 38.3C72.7 38.1 69.7 37.3 67.9 37.7C66.0 38.1 66.0 40.2 64.2 40.5C62.3 40.8 58.9 40.0 56.8 39.6C54.6 39.1 52.6 37.7 51.2 37.7C49.8 37.7 49.4 39.6 48.4 39.6C47.5 39.6 45.7 38.8 45.7 37.7C45.7 36.6 47.5 34.6 48.4 33.1C49.4 31.5 51.1 30.0 51.2 28.5C51.4 26.9 49.7 25.5 49.4 23.8C49.0 22.1 48.6 20.0 49.4 18.3Z" fill="none" stroke="#a3c4e5" stroke-width="2.400" opacity="0.8"/><path d="M68.8 69.2C69.1 67.6 71.1 65.4 72.5 64.9C73.9 64.5 76.0 65.4 77.1 66.4C78.3 67.4 79.5 69.6 79.4 71.1C79.2 72.5 77.7 74.7 76.2 75.3C74.8 75.9 71.9 75.8 70.7 74.8C69.4 73.7 68.5 70.8 68.8 69.2Z" fill="none" stroke="#a3c4e5" stroke-width="2.400" opacity="0.8"/><path d="M26.2 30.3C27.4 29.4 29.3 28.3 30.8 28.5C32.4 28.6 34.1 30.0 35.5 31.2C36.9 32.5 38.0 34.5 39.2 35.9C40.3 37.3 41.5 37.9 42.3 39.6C43.1 41.3 43.4 43.4 43.8 46.1C44.2 48.7 44.7 52.5 44.7 55.3C44.7 58.1 44.4 60.7 43.8 62.7C43.2 64.7 42.4 66.4 41.0 67.3C39.6 68.3 37.2 68.6 35.5 68.3C33.8 68.0 32.2 67.0 30.8 65.5C29.4 64.0 28.2 61.6 27.1 59.0C26.1 56.4 25.0 53.0 24.4 49.8C23.7 46.5 23.2 42.2 23.1 39.6C23.0 36.9 23.3 35.6 23.8 34.0C24.3 32.5 25.0 31.2 26.2 30.3Z" fill="#f7f3ee"/><path d="M49.4 18.3C50.1 16.6 52.6 14.0 54.0 13.6C55.4 13.3 56.8 14.7 57.7 16.4C58.6 18.1 58.8 21.8 59.5 23.8C60.3 25.8 60.3 27.1 62.3 28.5C64.3 29.8 69.0 31.1 71.6 32.2C74.2 33.2 76.1 33.9 78.1 34.9C80.1 36.0 84.1 38.1 83.6 38.6C83.2 39.2 77.9 38.4 75.3 38.3C72.7 38.1 69.7 37.3 67.9 37.7C66.0 38.1 66.0 40.2 64.2 40.5C62.3 40.8 58.9 40.0 56.8 39.6C54.6 39.1 52.6 37.7 51.2 37.7C49.8 37.7 49.4 39.6 48.4 39.6C47.5 39.6 45.7 38.8 45.7 37.7C45.7 36.6 47.5 34.6 48.4 33.1C49.4 31.5 51.1 30.0 51.2 28.5C51.4 26.9 49.7 25.5 49.4 23.8C49.0 22.1 48.6 20.0 49.4 18.3Z" fill="#f7f3ee"/><path d="M68.8 69.2C69.1 67.6 71.1 65.4 72.5 64.9C73.9 64.5 76.0 65.4 77.1 66.4C78.3 67.4 79.5 69.6 79.4 71.1C79.2 72.5 77.7 74.7 76.2 75.3C74.8 75.9 71.9 75.8 70.7 74.8C69.4 73.7 68.5 70.8 68.8 69.2Z" fill="#f7f3ee"/><path d="M40.1 45.7C40.4 44.8 40.9 41.5 41.9 40.1C43.0 38.7 45.0 37.3 46.2 37.2C47.4 37.0 48.8 38.7 49.4 39.0" fill="none" stroke="#f3c68f" stroke-width="1.100"/><path d="M89.2 33.1L98.4 28.5L99.7 30.3L90.5 35.3Z" fill="#a9c8e6"/><path d="M86.4 45.7L89.7 44.6L90.1 47.5L86.9 48.3Z" fill="#a9c8e6"/><path d="M36.0 77.5L44.2 75.3L45.3 78.5L37.5 80.9Z" fill="#a9c8e6"/><rect width="119.4" height="13.8" fill="#fff" opacity="0.5"/></svg>
<div class="a t" style="left:367.60px;top:417.25px;font-size:10.6px;line-height:10.6px;color:#383838;letter-spacing:-0.016px;">Guadeloupe</div>
<div class="a" style="left:386.90px;top:452.90px;width:19.60px;height:19.60px;border-radius:50%;background:rgba(128,141,165,0.69)"></div>
<div class="a t" style="left:387.82px;top:458.65px;font-size:10.4px;line-height:10.4px;color:#262a33;letter-spacing:-0.200px;">135</div>
<div class="a t" style="left:342.70px;top:476.35px;font-size:9.2px;line-height:9.2px;color:#5a5a5a;letter-spacing:-0.481px;text-shadow:0 0 1.500px #fff,0 0 1.500px #fff,0 0 1px #fff;">Basse-Terre</div>
<svg class="a" style="left:460.75px;top:415.95px;overflow:hidden" width="119.4" height="92.6" viewBox="0 0 119.4 92.6"><defs><pattern id="wv1" width="9" height="7.6" patternUnits="userSpaceOnUse"><path d="M0 2.600Q4.500 6.200 9 2.600" fill="none" stroke="#aac8e7" stroke-width="0.900"/></pattern></defs><rect width="119.4" height="92.6" fill="#bdd6ef"/><rect width="119.4" height="92.6" fill="url(#wv1)"/><path d="M4.4 7.2C4.3 9.9 3.2 17.7 3.5 23.8C3.8 30.0 4.4 36.8 6.3 44.2C8.1 51.6 11.7 61.8 14.6 68.3C17.6 74.8 20.6 78.9 23.9 83.1C27.1 87.3 32.4 91.6 34.1 93.3" fill="none" stroke="#a0c0df" stroke-width="1.300" opacity="0.9"/><path d="M4.4 7.2C8.9 6.5 19.1 4.1 31.3 3.5C43.5 2.8 65.5 2.8 77.6 3.5C89.6 4.1 97.6 4.4 103.5 7.2C109.4 9.9 110.6 14.0 112.8 20.1C114.9 26.3 115.9 35.9 116.5 44.2C117.1 52.5 117.1 61.9 116.5 70.1C115.9 78.3 113.4 89.4 112.8 93.3" fill="none" stroke="#a0c0df" stroke-width="1.300" opacity="0.9"/><path d="M33.1 18.3C33.8 16.6 35.6 15.2 37.8 14.6C39.9 14.0 43.5 14.0 46.1 14.6C48.7 15.2 51.3 17.0 53.5 18.3C55.7 19.5 57.1 20.6 59.1 22.0C61.1 23.4 63.7 24.3 65.5 26.6C67.4 28.9 68.5 33.5 70.2 35.9C71.9 38.2 75.1 38.8 75.7 40.5C76.3 42.2 73.3 44.5 73.9 46.1C74.5 47.6 77.9 48.2 79.4 49.8C81.0 51.3 82.1 53.1 83.1 55.3C84.2 57.5 85.6 60.2 85.9 62.7C86.2 65.2 85.5 67.7 85.0 70.1C84.5 72.6 83.9 76.1 83.1 77.5C82.4 78.9 81.1 79.1 80.4 78.5C79.6 77.8 79.6 75.2 78.5 73.8C77.4 72.4 75.6 70.9 73.9 70.1C72.2 69.4 69.7 70.0 68.3 69.2C66.9 68.4 66.5 66.6 65.5 65.5C64.6 64.4 64.2 62.9 62.8 62.7C61.4 62.6 58.8 63.8 57.2 64.6C55.7 65.3 54.4 67.5 53.5 67.3C52.6 67.2 51.5 64.7 51.7 63.6C51.8 62.6 52.9 61.5 54.4 60.9C56.0 60.2 59.1 60.6 60.9 59.9C62.8 59.3 64.9 58.2 65.5 57.2C66.2 56.1 66.0 54.4 64.6 53.5C63.2 52.5 59.5 52.2 57.2 51.6C54.9 51.0 52.6 51.0 50.7 49.8C48.9 48.5 47.6 46.2 46.1 44.2C44.6 42.2 42.9 39.9 41.5 37.7C40.1 35.6 39.0 33.4 37.8 31.2C36.5 29.1 34.8 26.9 34.1 24.8C33.3 22.6 32.5 20.0 33.1 18.3Z" fill="none" stroke="#9cbfe2" stroke-width="3.200" opacity="0.75"/><path d="M33.1 18.3C33.8 16.6 35.6 15.2 37.8 14.6C39.9 14.0 43.5 14.0 46.1 14.6C48.7 15.2 51.3 17.0 53.5 18.3C55.7 19.5 57.1 20.6 59.1 22.0C61.1 23.4 63.7 24.3 65.5 26.6C67.4 28.9 68.5 33.5 70.2 35.9C71.9 38.2 75.1 38.8 75.7 40.5C76.3 42.2 73.3 44.5 73.9 46.1C74.5 47.6 77.9 48.2 79.4 49.8C81.0 51.3 82.1 53.1 83.1 55.3C84.2 57.5 85.6 60.2 85.9 62.7C86.2 65.2 85.5 67.7 85.0 70.1C84.5 72.6 83.9 76.1 83.1 77.5C82.4 78.9 81.1 79.1 80.4 78.5C79.6 77.8 79.6 75.2 78.5 73.8C77.4 72.4 75.6 70.9 73.9 70.1C72.2 69.4 69.7 70.0 68.3 69.2C66.9 68.4 66.5 66.6 65.5 65.5C64.6 64.4 64.2 62.9 62.8 62.7C61.4 62.6 58.8 63.8 57.2 64.6C55.7 65.3 54.4 67.5 53.5 67.3C52.6 67.2 51.5 64.7 51.7 63.6C51.8 62.6 52.9 61.5 54.4 60.9C56.0 60.2 59.1 60.6 60.9 59.9C62.8 59.3 64.9 58.2 65.5 57.2C66.2 56.1 66.0 54.4 64.6 53.5C63.2 52.5 59.5 52.2 57.2 51.6C54.9 51.0 52.6 51.0 50.7 49.8C48.9 48.5 47.6 46.2 46.1 44.2C44.6 42.2 42.9 39.9 41.5 37.7C40.1 35.6 39.0 33.4 37.8 31.2C36.5 29.1 34.8 26.9 34.1 24.8C33.3 22.6 32.5 20.0 33.1 18.3Z" fill="#f7f3ee"/><path d="M35.4 19.2C36.1 16.2 42.5 15.6 46.1 16.1C49.7 16.5 54.2 19.8 57.2 22.0C60.2 24.2 63.9 26.5 64.2 29.4C64.6 32.3 61.6 37.4 59.1 39.6C56.5 41.7 51.8 43.3 48.9 42.3C45.9 41.4 43.7 37.9 41.5 34.0C39.2 30.2 34.6 22.2 35.4 19.2Z" fill="#e6eedb" opacity="0.8"/><path d="M64.2 52.5C64.7 53.5 66.6 56.1 66.8 58.1C67.1 60.1 65.7 62.7 65.7 64.6C65.7 66.4 66.7 68.4 66.8 69.2" fill="none" stroke="#f3c68f" stroke-width="1.100"/><rect width="119.4" height="13.8" fill="#fff" opacity="0.5"/></svg>
<div class="a t" style="left:495.60px;top:417.25px;font-size:10.6px;line-height:10.6px;color:#383838;letter-spacing:0.101px;">Martinique</div>
<div class="a" style="left:511.30px;top:453.70px;width:18.60px;height:18.60px;border-radius:50%;background:rgba(128,141,165,0.69)"></div>
<div class="a t" style="left:511.72px;top:458.95px;font-size:10.4px;line-height:10.4px;color:#262a33;letter-spacing:-0.200px;">125</div>
<div class="a t" style="left:510.80px;top:444.75px;font-size:9.2px;line-height:9.2px;color:#5a5a5a;letter-spacing:-0.284px;text-shadow:0 0 1.500px #fff,0 0 1.500px #fff,0 0 1px #fff;">La Trinité</div>
<div class="a t" style="left:525.00px;top:482.65px;font-size:9.2px;line-height:9.2px;color:#5a5a5a;letter-spacing:-0.437px;text-shadow:0 0 1.500px #fff,0 0 1.500px #fff,0 0 1px #fff;">Le Marin</div>
<svg class="a" style="left:585.3px;top:415.95px;overflow:hidden" width="119.4" height="92.6" viewBox="0 0 119.4 92.6"><defs><pattern id="wv2" width="9" height="7.6" patternUnits="userSpaceOnUse"><path d="M0 2.600Q4.500 6.200 9 2.600" fill="none" stroke="#aac8e7" stroke-width="0.900"/></pattern></defs><rect width="119.4" height="92.6" fill="#f8f4f0"/><path d="M-3.4 9.0C-0.7 9.1 7.4 9.1 13.2 9.4C19.1 9.7 26.2 10.2 31.7 10.9C37.3 11.5 42.2 12.3 46.6 13.1C50.9 13.9 54.0 14.0 57.7 15.5C61.4 17.0 65.4 19.5 68.8 22.0C72.2 24.4 75.9 28.0 78.0 30.3C80.2 32.6 80.2 34.6 81.7 35.9C83.3 37.1 85.7 36.6 87.3 37.7C88.8 38.8 89.6 40.0 91.0 42.3C92.4 44.7 94.1 48.2 95.6 51.6C97.2 55.0 98.7 59.0 100.3 62.7C101.8 66.4 103.2 70.4 104.9 73.8C106.6 77.2 108.2 80.5 110.4 83.1C112.7 85.7 116.1 87.4 118.4 89.6C120.7 91.7 123.3 95.0 124.3 96.1L121.4 94.6L121.4 -2L-2 -2Z" fill="#bdd6ef"/><path d="M-3.4 9.0C-0.7 9.1 7.4 9.1 13.2 9.4C19.1 9.7 26.2 10.2 31.7 10.9C37.3 11.5 42.2 12.3 46.6 13.1C50.9 13.9 54.0 14.0 57.7 15.5C61.4 17.0 65.4 19.5 68.8 22.0C72.2 24.4 75.9 28.0 78.0 30.3C80.2 32.6 80.2 34.6 81.7 35.9C83.3 37.1 85.7 36.6 87.3 37.7C88.8 38.8 89.6 40.0 91.0 42.3C92.4 44.7 94.1 48.2 95.6 51.6C97.2 55.0 98.7 59.0 100.3 62.7C101.8 66.4 103.2 70.4 104.9 73.8C106.6 77.2 108.2 80.5 110.4 83.1C112.7 85.7 116.1 87.4 118.4 89.6C120.7 91.7 123.3 95.0 124.3 96.1L121.4 94.6L121.4 -2L-2 -2Z" fill="url(#wv2)"/><path d="M55.8 13.6C58.9 14.4 68.5 15.0 74.3 18.3C80.2 21.5 86.7 27.8 91.0 33.1C95.3 38.3 97.8 44.2 100.3 49.8C102.7 55.3 103.7 61.5 105.8 66.4C108.0 71.4 111.1 76.6 113.2 79.4C115.3 82.2 117.5 82.5 118.4 83.1" fill="none" stroke="#a0c0df" stroke-width="1.200" opacity="0.9"/><path d="M19.7 28.5L24.3 26.6L29.0 29.4L25.3 34.0L20.6 35.9L17.8 33.1Z" fill="#b4d2f0"/><path d="M40.6 13.6L44.3 13.1L42.5 18.3L40.1 19.8Z" fill="#b4d2f0"/><path d="M81.4 34.0L84.0 33.1L83.2 38.6L81.4 39.0Z" fill="#b4d2f0"/><path d="M87.3 39.0L90.1 38.3L89.1 43.3L87.3 43.8Z" fill="#b4d2f0"/><path d="M43.2 13.6L39.1 18.3L36.4 22.0L34.5 26.6L34.0 31.2L35.8 36.8L36.9 42.3L39.5 47.0L39.1 51.6L39.1 59.0L38.2 64.6L35.4 70.1L31.7 76.6L28.0 73.8L22.5 72.0L17.8 74.8L13.2 74.8L8.6 72.9L4.9 73.8L3.0 79.4L5.8 84.0L-0.1 85.9" fill="none" stroke="#a09eb2" stroke-width="1.200" stroke-linejoin="round"/><path d="M31.7 76.6L36.4 77.5L41.0 79.4L44.7 77.2L47.5 76.1L52.1 78.5L55.8 77.5L59.5 75.7L63.2 75.7L66.0 72.0L68.8 70.1L71.6 64.6L74.3 59.0L78.0 54.4L81.7 49.8L84.5 46.1L87.3 43.3L88.2 39.6" fill="none" stroke="#a09eb2" stroke-width="1.200" stroke-linejoin="round"/><path d="M29.0 77.5C28.8 78.5 27.6 81.2 28.0 83.1C28.5 84.9 29.9 87.1 31.7 88.6C33.6 90.2 37.9 91.7 39.1 92.3" fill="none" stroke="#cfcfd6" stroke-width="0.700"/><rect width="119.4" height="13.8" fill="#fff" opacity="0.5"/></svg>
<div class="a t" style="left:627.10px;top:417.25px;font-size:10.6px;line-height:10.6px;color:#383838;letter-spacing:-0.254px;">Guyane</div>
<div class="a" style="left:636.90px;top:454.60px;width:15.80px;height:15.80px;border-radius:50%;background:rgba(128,141,165,0.69)"></div>
<div class="a t" style="left:638.92px;top:458.45px;font-size:10.4px;line-height:10.4px;color:#262a33;letter-spacing:-0.200px;">58</div>
<div class="a t" style="left:643.60px;top:440.05px;font-size:9.2px;line-height:9.2px;color:#5a5a5a;letter-spacing:-0.604px;text-shadow:0 0 1.500px #fff,0 0 1.500px #fff,0 0 1px #fff;">Cayenne</div>
<div class="a t" style="left:613.00px;top:461.24px;font-size:7.6px;line-height:7.6px;color:#5a5a5a;letter-spacing:-0.208px;text-shadow:0 0 1.500px #fff,0 0 1.500px #fff,0 0 1px #fff;">Cottica</div>
<svg class="a" style="left:709.85px;top:415.95px;overflow:hidden" width="119.4" height="92.6" viewBox="0 0 119.4 92.6"><defs><pattern id="wv3" width="9" height="7.6" patternUnits="userSpaceOnUse"><path d="M0 2.600Q4.500 6.200 9 2.600" fill="none" stroke="#aac8e7" stroke-width="0.900"/></pattern></defs><rect width="119.4" height="92.6" fill="#bdd6ef"/><rect width="119.4" height="92.6" fill="url(#wv3)"/><path d="M0.5 13.3C2.2 12.0 3.1 7.3 11.1 5.3C19.1 3.3 36.3 1.6 48.3 1.3C60.2 1.1 73.1 1.6 82.8 4.0C92.5 6.4 100.9 10.9 106.7 16.0C112.5 21.0 115.3 25.3 117.3 34.5C119.3 43.8 119.5 62.0 118.7 71.7C117.8 81.5 113.1 89.4 112.0 93.0" fill="none" stroke="#a0c0df" stroke-width="1.300" opacity="0.9"/><path d="M-0.1 55.8C0.9 58.9 3.0 68.2 5.8 74.4C8.5 80.6 14.6 89.9 16.4 93.0" fill="none" stroke="#a0c0df" stroke-width="1.300" opacity="0.9"/><path d="M31.3 27.6C33.8 24.7 37.2 20.7 41.4 18.6C45.6 16.5 51.5 14.9 56.5 14.9C61.6 14.9 67.8 16.5 71.6 18.6C75.5 20.7 77.2 24.5 79.3 27.6C81.5 30.8 81.9 34.4 84.4 37.7C86.9 41.1 92.6 44.1 94.5 47.8C96.3 51.6 96.0 56.5 95.5 60.3C95.1 64.1 94.5 67.7 91.8 70.4C89.1 73.1 84.4 75.9 79.3 76.8C74.3 77.6 67.0 76.5 61.6 75.4C56.1 74.4 50.6 72.9 46.4 70.4C42.2 67.9 39.2 64.1 36.3 60.3C33.4 56.5 30.6 51.8 28.9 47.8C27.2 43.8 25.8 39.8 26.2 36.4C26.6 33.0 28.7 30.6 31.3 27.6Z" fill="none" stroke="#9cbfe2" stroke-width="2.600" opacity="0.8"/><path d="M31.3 27.6C33.8 24.7 37.2 20.7 41.4 18.6C45.6 16.5 51.5 14.9 56.5 14.9C61.6 14.9 67.8 16.5 71.6 18.6C75.5 20.7 77.2 24.5 79.3 27.6C81.5 30.8 81.9 34.4 84.4 37.7C86.9 41.1 92.6 44.1 94.5 47.8C96.3 51.6 96.0 56.5 95.5 60.3C95.1 64.1 94.5 67.7 91.8 70.4C89.1 73.1 84.4 75.9 79.3 76.8C74.3 77.6 67.0 76.5 61.6 75.4C56.1 74.4 50.6 72.9 46.4 70.4C42.2 67.9 39.2 64.1 36.3 60.3C33.4 56.5 30.6 51.8 28.9 47.8C27.2 43.8 25.8 39.8 26.2 36.4C26.6 33.0 28.7 30.6 31.3 27.6Z" fill="#f7f3ee"/><path d="M45.6 21.3C48.3 19.5 56.7 21.7 61.6 23.9C66.4 26.1 70.8 30.6 74.8 34.5C78.8 38.5 83.2 43.0 85.5 47.8C87.7 52.7 89.9 59.8 88.1 63.8C86.3 67.7 78.4 72.6 74.8 71.7C71.3 70.8 70.0 62.9 66.9 58.5C63.8 54.0 59.8 49.2 56.2 45.2C52.7 41.2 47.4 38.5 45.6 34.5C43.8 30.6 43.0 23.0 45.6 21.3Z" fill="#e9f0e0" opacity="0.8"/><path d="M31.0 26.6C30.1 28.1 26.3 32.3 25.7 35.9C25.1 39.4 26.0 43.8 27.6 47.8C29.1 51.8 33.8 57.8 35.0 59.8" fill="none" stroke="#f3c68f" stroke-width="1"/><path d="M40.3 17.3C43.0 16.7 50.9 13.8 56.2 13.8C61.6 13.9 68.3 15.5 72.2 17.5C76.1 19.6 78.4 24.6 79.6 26.0" fill="none" stroke="#f3c68f" stroke-width="1"/><rect width="119.4" height="13.8" fill="#fff" opacity="0.5"/></svg>
<div class="a t" style="left:744.30px;top:417.25px;font-size:10.6px;line-height:10.6px;color:#383838;letter-spacing:-0.402px;">La Réunion</div>
<div class="a" style="left:759.50px;top:452.40px;width:20.00px;height:20.00px;border-radius:50%;background:rgba(128,141,165,0.69)"></div>
<div class="a t" style="left:760.62px;top:458.35px;font-size:10.4px;line-height:10.4px;color:#262a33;letter-spacing:-0.200px;">150</div>
<div class="a" style="opacity:0.75">
<div class="a t" style="left:738.20px;top:425.35px;font-size:9.2px;line-height:9.2px;color:#5a5a5a;letter-spacing:-0.341px;text-shadow:0 0 1.500px #fff,0 0 1.500px #fff,0 0 1px #fff;">Saint-Denis</div>
</div>
<div class="a t" style="left:741.40px;top:487.05px;font-size:9.2px;line-height:9.2px;color:#5a5a5a;letter-spacing:-0.373px;text-shadow:0 0 1.500px #fff,0 0 1.500px #fff,0 0 1px #fff;">Saint-Pierre</div>
<svg class="a" style="left:834.4px;top:415.95px;overflow:hidden" width="119.4" height="92.6" viewBox="0 0 119.4 92.6"><defs><pattern id="wv4" width="9" height="7.6" patternUnits="userSpaceOnUse"><path d="M0 2.600Q4.500 6.200 9 2.600" fill="none" stroke="#aac8e7" stroke-width="0.900"/></pattern></defs><rect width="119.4" height="92.6" fill="#bdd6ef"/><rect width="119.4" height="92.6" fill="url(#wv4)"/><path d="M109.6 8.0C110.8 11.5 115.0 20.4 116.3 29.2C117.6 38.1 118.3 50.5 117.6 61.1C116.9 71.7 113.2 87.7 112.3 93.0" fill="none" stroke="#a0c0df" stroke-width="1.300" opacity="0.9"/><path d="M40.0 23.8C40.8 22.0 43.1 20.9 44.7 20.1C46.2 19.4 48.2 18.6 49.3 19.2C50.4 19.8 50.7 21.8 51.2 23.8C51.6 25.8 51.2 29.2 52.1 31.2C53.0 33.2 53.8 34.6 56.7 35.9C59.6 37.1 67.2 37.7 69.7 38.6C72.1 39.6 72.0 40.2 71.5 41.4C71.1 42.7 67.9 44.4 66.9 46.1C65.9 47.7 65.1 50.1 65.6 51.6C66.1 53.1 69.1 53.8 69.7 55.3C70.2 56.9 69.7 59.0 68.7 60.9C67.8 62.7 65.5 64.6 64.1 66.4C62.7 68.3 61.3 70.1 60.4 72.0C59.5 73.8 59.8 76.6 58.6 77.5C57.3 78.5 54.4 78.5 53.0 77.5C51.6 76.6 50.5 73.8 50.2 72.0C49.9 70.1 51.5 68.3 51.2 66.4C50.8 64.6 48.7 62.7 48.4 60.9C48.1 59.0 48.9 57.0 49.3 55.3C49.7 53.6 50.8 52.5 50.8 50.7C50.8 48.8 49.7 46.5 49.3 44.2C48.9 41.9 49.1 38.6 48.4 36.8C47.6 34.9 46.1 34.0 44.7 33.1C43.3 32.2 40.8 32.8 40.0 31.2C39.3 29.7 39.3 25.7 40.0 23.8Z" fill="none" stroke="#9cbfe2" stroke-width="3" opacity="0.7"/><path d="M40.0 23.8C40.8 22.0 43.1 20.9 44.7 20.1C46.2 19.4 48.2 18.6 49.3 19.2C50.4 19.8 50.7 21.8 51.2 23.8C51.6 25.8 51.2 29.2 52.1 31.2C53.0 33.2 53.8 34.6 56.7 35.9C59.6 37.1 67.2 37.7 69.7 38.6C72.1 39.6 72.0 40.2 71.5 41.4C71.1 42.7 67.9 44.4 66.9 46.1C65.9 47.7 65.1 50.1 65.6 51.6C66.1 53.1 69.1 53.8 69.7 55.3C70.2 56.9 69.7 59.0 68.7 60.9C67.8 62.7 65.5 64.6 64.1 66.4C62.7 68.3 61.3 70.1 60.4 72.0C59.5 73.8 59.8 76.6 58.6 77.5C57.3 78.5 54.4 78.5 53.0 77.5C51.6 76.6 50.5 73.8 50.2 72.0C49.9 70.1 51.5 68.3 51.2 66.4C50.8 64.6 48.7 62.7 48.4 60.9C48.1 59.0 48.9 57.0 49.3 55.3C49.7 53.6 50.8 52.5 50.8 50.7C50.8 48.8 49.7 46.5 49.3 44.2C48.9 41.9 49.1 38.6 48.4 36.8C47.6 34.9 46.1 34.0 44.7 33.1C43.3 32.2 40.8 32.8 40.0 31.2C39.3 29.7 39.3 25.7 40.0 23.8Z" fill="#f7f3ee"/><path d="M80.4 37.7C80.7 37.0 82.5 38.0 83.0 39.0C83.6 40.0 84.1 43.1 83.7 43.8C83.4 44.5 81.7 44.3 81.2 43.3C80.6 42.3 80.1 38.4 80.4 37.7Z" fill="#dfe9f2" stroke="#9cbfe2" stroke-width="1.200"/><path d="M72.5 43.3C72.9 42.5 74.8 41.7 75.2 42.3C75.6 43.0 75.4 46.2 74.9 47.0C74.4 47.7 72.7 47.6 72.3 47.0C71.9 46.4 72.0 44.0 72.5 43.3Z" fill="#a9c8e6"/><rect width="119.4" height="13.8" fill="#fff" opacity="0.5"/></svg>
<div class="a t" style="left:874.50px;top:417.25px;font-size:10.6px;line-height:10.6px;color:#383838;letter-spacing:0.113px;">Mayotte</div>
<div class="a" style="left:887.00px;top:455.80px;width:13.20px;height:13.20px;border-radius:50%;background:rgba(128,141,165,0.69)"></div>
<div class="a t" style="left:887.72px;top:458.35px;font-size:10.4px;line-height:10.4px;color:#262a33;letter-spacing:-0.200px;">17</div>
<div class="a t" style="left:885.60px;top:443.45px;font-size:9.2px;line-height:9.2px;color:#5a5a5a;letter-spacing:-0.320px;text-shadow:0 0 1.500px #fff,0 0 1.500px #fff,0 0 1px #fff;">Koungou</div>
<div class="a t" style="left:883.50px;top:476.65px;font-size:9.2px;line-height:9.2px;color:#5a5a5a;letter-spacing:-0.341px;text-shadow:0 0 1.500px #fff,0 0 1.500px #fff,0 0 1px #fff;">Bandrélé</div>
<div class="a" style="left:0.00px;top:516.00px;width:960.00px;height:24.00px;background:#ececec;"></div>
<svg class="a" style="left:9.4px;top:522.8px" width="10" height="10" viewBox="0 0 10 10"><path d="M0 1.400L4.200 .800V4.700H0zM4.800 .700L10 0V4.700H4.800zM0 5.300H4.200V9.200L0 8.600zM4.800 5.300H10V10L4.800 9.300z" fill="#111"/></svg>
<div class="a" style="left:29.00px;top:516.20px;width:206.00px;height:23.80px;background:#fff;border:1px solid #d2d2d2;border-bottom:none;"></div>
<svg class="a" style="left:35.800px;top:522.600px" width="10.500" height="10.500" viewBox="0 0 10 10"><circle cx="5.800" cy="3.800" r="2.900" fill="none" stroke="#333" stroke-width="0.900"/><path d="M3.700 6L0.600 9.300" stroke="#333" stroke-width="1"/></svg>
<div class="a t" style="left:53.20px;top:524.35px;font-size:9.2px;line-height:9.2px;color:#3a3a3a;letter-spacing:-0.178px;">Taper ici pour rechercher</div>
<svg class="a" style="left:244.5px;top:523px" width="10" height="10" viewBox="0 0 10 10"><circle cx="5" cy="5" r="3.700" fill="none" stroke="#111" stroke-width="1.300"/></svg>
<svg class="a" style="left:272.5px;top:523.5px" width="11" height="9" viewBox="0 0 11 9"><rect x="1.500" y="1.800" width="5.500" height="5.400" fill="none" stroke="#333" stroke-width="0.900"/><path d="M0.300 0.600V8.400M8.600 0.600V3.500M8.600 5.500V8.400M7.500 4.500H9.800" stroke="#333" stroke-width="0.900"/></svg>
<svg class="a" style="left:302.5px;top:522px" width="13" height="12" viewBox="0 0 13 12"><path d="M0.500 1.200H5L6.200 2.600H12.500V10.500H0.500z" fill="#f5b32e"/><path d="M0.500 4H12.500V10.500H0.500z" fill="#fbd35c"/><path d="M3.200 7H9.800V11H3.200z" fill="#1f7ad6"/><path d="M5 9H8V11H5z" fill="#fbd35c"/></svg>
<svg class="a" style="left:331.3px;top:520.8px" width="12.500" height="13.500" viewBox="0 0 12.500 13.500"><path d="M3.800 3.800V2.200C3.800 1.400 4.400 .800 5.200 .800H7.300C8.100 .800 8.700 1.400 8.700 2.200V3.800" fill="none" stroke="#333" stroke-width="0.900"/><rect x="0.300" y="3.600" width="11.900" height="9.600" fill="#3a3a3a"/><rect x="3.500" y="5.800" width="2.400" height="2.400" fill="#f25022"/><rect x="6.600" y="5.800" width="2.400" height="2.400" fill="#7fba00"/><rect x="3.500" y="8.900" width="2.400" height="2.400" fill="#00a4ef"/><rect x="6.600" y="8.900" width="2.400" height="2.400" fill="#ffb900"/></svg>
<svg class="a" style="left:361.5px;top:521.5px" width="14" height="12.500" viewBox="0 0 14 12.500"><g fill="#111"><path d="M3.500 0L7 2.200L3.500 4.400L0 2.200z"/><path d="M10.500 0L14 2.200L10.500 4.400L7 2.200z"/><path d="M3.500 4.600L7 6.800L3.500 9L0 6.800z"/><path d="M10.500 4.600L14 6.800L10.500 9L7 6.800z"/><path d="M7 7.600L10.300 9.700L7 11.900L3.700 9.700z"/></g></svg>
<div class="a" style="left:390.80px;top:521.50px;width:12.40px;height:13.00px;background:#1b1c44;"></div>
<svg class="a" style="left:393.5px;top:523px" width="7" height="10" viewBox="0 0 7 10"><path d="M4.600 0.300L1.600 4.200L4.400 5.400L2 9.700" fill="none" stroke="#2aa8ff" stroke-width="1.500" stroke-linejoin="round"/></svg>
<div class="a" style="left:412.50px;top:516.00px;width:28.80px;height:24.00px;background:#f4f4f4;"></div>
<div class="a" style="left:412.50px;top:538.20px;width:28.80px;height:1.80px;background:#3a8fd8;"></div>
<svg class="a" style="left:419.7px;top:521.4px" width="13" height="13" viewBox="0 0 48 48"><circle cx="24" cy="24" r="22" fill="#fff"/><path d="M24 2a22 22 0 0 1 19.050 11H24a11 11 0 0 0-9.530 5.500L5 13A22 22 0 0 1 24 2z" fill="#ea4335"/><path d="M43.050 13A22 22 0 0 1 24 46l9.530-16.500A11 11 0 0 0 33.530 18.500z" fill="#fbbc05"/><path d="M24 46A22 22 0 0 1 4.950 13l9.520 16.500A11 11 0 0 0 24 35l9.530-5.500z" fill="#34a853"/><path d="M43.050 13H24a11 11 0 0 1 9.530 16.500z" fill="#fbbc05"/><circle cx="24" cy="24" r="10" fill="#fff"/><circle cx="24" cy="24" r="8" fill="#4285f4"/></svg>
<svg class="a" style="left:449px;top:521.5px" width="14" height="13" viewBox="0 0 14 13"><path d="M3 1.500L12.500 0.500V12L3 11z" fill="#f3f7fd" stroke="#9db6df" stroke-width="0.500"/><path d="M0.500 2.500L8.500 1.500V11.500L0.500 10.500z" fill="#4c82d0"/><path d="M2 4.500L3 8.500L4.300 5L5.600 8.500L6.800 4.500" fill="none" stroke="#fff" stroke-width="0.900"/><path d="M9.500 3.500H11.500M9.500 5.500H11.500M9.500 7.500H11.500" stroke="#7a98c8" stroke-width="0.600"/></svg>
<svg class="a" style="left:478.5px;top:521.5px" width="13.500" height="13" viewBox="0 0 13.500 13"><path d="M4 1L12.500 0.300V12.300L4 11.500z" fill="#f0f6f5" stroke="#a4c4bf" stroke-width="0.500"/><path d="M0.500 2.600L7.800 1.800V11.400L0.500 10.600z" fill="#4f9a94"/><rect x="2.300" y="4.200" width="3.600" height="4.800" fill="#d9ebe8"/><path d="M9 3.500H11.500M9 5.500H11.500M9 7.500H11.500" stroke="#7aa8a0" stroke-width="0.600"/></svg>
<svg class="a" style="left:507px;top:521.5px" width="14" height="13" viewBox="0 0 14 13"><path d="M3.500 1.200L13 0.500V12.300L3.500 11.500z" fill="#f2f8ef" stroke="#a3cd97" stroke-width="0.500"/><path d="M0.500 2.500L8.500 1.500V11.500L0.500 10.500z" fill="#5cae57"/><path d="M2.500 4.300L6.300 8.800M6.300 4.300L2.500 8.800" stroke="#fff" stroke-width="1.100"/><path d="M9.500 3.500H12M9.500 5.500H12M9.500 7.500H12M9.500 9.500H12" stroke="#6fb05f" stroke-width="0.700"/></svg>
<svg class="a" style="left:536.5px;top:521.5px" width="14.500" height="13" viewBox="0 0 14.500 13"><rect x="0.800" y="2.500" width="9" height="9" fill="#4a7fd0" rx="1"/><rect x="1.800" y="3.500" width="7" height="7" fill="#f08a24"/><circle cx="8.500" cy="4" r="3.200" fill="#f6a93b"/><path d="M10 6.500L14 7.500L11.500 9.500z" fill="#e9c15a"/><circle cx="5" cy="8" r="2" fill="#e8541e"/></svg>
<svg class="a" style="left:567.3px;top:521.3px" width="13" height="13.500" viewBox="0 0 13 13.500"><defs><linearGradient id="rb" x1="0" y1="1" x2="1" y2="0"><stop offset="0" stop-color="#e8281e"/><stop offset="0.300" stop-color="#f6c21a"/><stop offset="0.550" stop-color="#4cc23a"/><stop offset="0.800" stop-color="#22b8c8"/><stop offset="1" stop-color="#7a3ad0"/></linearGradient></defs><rect width="13" height="13.500" fill="#151515"/><rect x="1" y="2" width="11" height="9.500" fill="url(#rb)"/><path d="M1 1H12M1 12.500H12" stroke="#888" stroke-width="0.700" stroke-dasharray="1 1"/></svg>
<svg class="a" style="left:595.8px;top:521.2px" width="13.500" height="13.500" viewBox="0 0 27 27"><defs><linearGradient id="eg" x1="0" y1="0" x2="1" y2="1"><stop offset="0" stop-color="#35c1f1"/><stop offset="0.500" stop-color="#0f8ad8"/><stop offset="1" stop-color="#0c59a4"/></linearGradient></defs><circle cx="13.500" cy="13.500" r="13" fill="url(#eg)"/><path d="M2 12C4 4 12 1 19 4C24 6.500 26 11 25.500 14C25 17.500 22 19 19 18.500C21 16 20 11.500 15 10.500C9 9.500 5 14 7 20C3 17.500 1.500 15 2 12z" fill="#4fd17a" opacity="0.900"/><path d="M11 13.500C10 17 12 22 17 23.500C21 24.500 24 22.500 25 21C22 22 17.500 21.500 16 18C15 15.500 16 14 17 13z" fill="#e9f4fb"/></svg>
<svg class="a" style="left:799.7px;top:523.4px" width="11" height="11" viewBox="0 0 11 11"><circle cx="5.500" cy="5.500" r="5.500" fill="#1a8fe3"/></svg>
<div class="a t" style="left:802.39px;top:524.65px;font-size:9.2px;line-height:9.2px;color:#fff;font-weight:bold;">?</div>
<svg class="a" style="left:817.4px;top:525.6px" width="8.400" height="5.200" viewBox="0 0 8.400 5.200"><path d="M0.500 4.600L4.200 0.900L7.900 4.600" fill="none" stroke="#222" stroke-width="1.250"/></svg>
<svg class="a" style="left:831.5px;top:523.8px" width="9" height="11" viewBox="0 0 9 11"><rect x="1.200" y="2" width="4.800" height="6.500" rx="1" fill="none" stroke="#333" stroke-width="0.800"/><circle cx="3.600" cy="5.200" r="1.200" fill="none" stroke="#333" stroke-width="0.700"/><path d="M6.500 3.500H8.300V7H6.500M2 .800H5.200M2 10H5.200" fill="none" stroke="#333" stroke-width="0.700"/></svg>
<svg class="a" style="left:844px;top:524px" width="12" height="10" viewBox="0 0 12 10"><path d="M2.800 7.200C1.300 7.200 .500 6.300 .500 5.300C.500 4.200 1.400 3.500 2.400 3.600C2.700 2.200 3.900 1.200 5.400 1.200C7 1.200 8.200 2.200 8.500 3.600C9.600 3.700 10.300 4.500 10.300 5.400C10.300 6.400 9.600 7.200 8.600 7.200z" fill="#444"/><circle cx="9" cy="7.300" r="2.500" fill="#e81123"/><path d="M8 6.300L10 8.300M10 6.300L8 8.300" stroke="#fff" stroke-width="0.700"/></svg>
<svg class="a" style="left:860px;top:524.6px" width="11" height="8" viewBox="0 0 11 8"><rect x="2.800" y="2.300" width="7" height="4.200" fill="#222"/><rect x="9.800" y="3.500" width="0.800" height="1.800" fill="#222"/><path d="M0.800 1.200C.800 .500 2.600 .500 2.600 1.200V3L1.700 3.700V5" fill="none" stroke="#222" stroke-width="0.900"/></svg>
<svg class="a" style="left:874.3px;top:524px" width="11" height="10" viewBox="0 0 11 10"><g fill="none" stroke="#777" stroke-width="0.800"><path d="M1 9A8 8 0 0 1 9 1"/><path d="M3.200 9A5.800 5.800 0 0 1 9 3.200"/><path d="M5.400 9A3.600 3.600 0 0 1 9 5.400"/></g><path d="M7.400 9A1.600 1.600 0 0 1 9 7.400V9z" fill="#666"/></svg>
<div class="a t" style="left:899.20px;top:519.04px;font-size:8.2px;line-height:8.2px;color:#222;letter-spacing:-1.064px;">14:01</div>
<div class="a t" style="left:889.70px;top:529.94px;font-size:8.2px;line-height:8.2px;color:#222;letter-spacing:-0.674px;">23/04/2021</div>
<svg class="a" style="left:935px;top:523px" width="14" height="14" viewBox="0 0 14 14"><path d="M0.500 .500H10V7.300H4.600L2.600 9.300V7.300H.500z" fill="#222"/><path d="M2 2.300H8.500M2 3.800H8.500M2 5.300H6.500" stroke="#ececec" stroke-width="0.500"/><circle cx="9.900" cy="9.300" r="3.800" fill="#ececec" stroke="#444" stroke-width="0.600"/></svg>
<div class="a t" style="left:943.01px;top:529.13px;font-size:6.8px;line-height:6.8px;color:#111;font-weight:bold;">2</div>
<div class="a" style="left:956.80px;top:516.00px;width:0.80px;height:24.00px;background:#bdbdbd;"></div>
</div></body></html>
